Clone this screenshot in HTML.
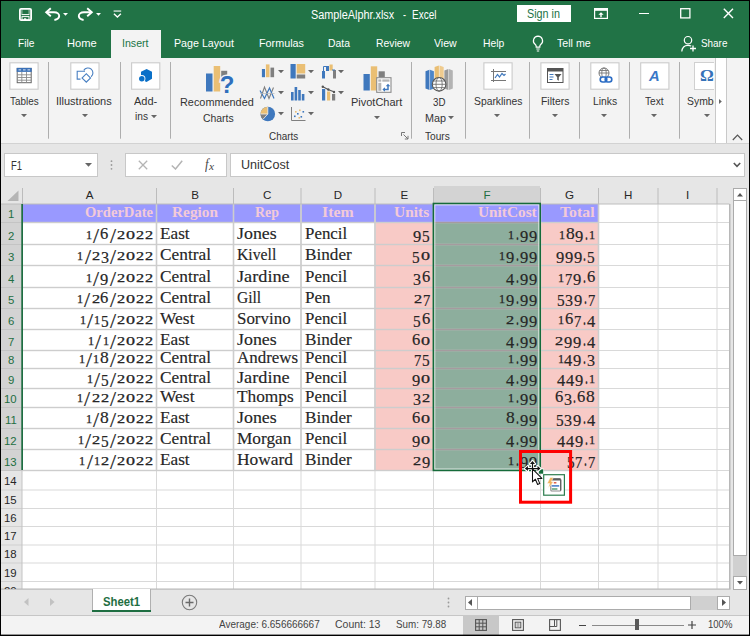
<!DOCTYPE html>
<html><head><meta charset="utf-8"><title>SampleAlphr.xlsx - Excel</title>
<style>
html,body{margin:0;padding:0;}
body{width:750px;height:636px;overflow:hidden;background:#000;position:relative;font-family:"Liberation Sans",sans-serif;}
.b{position:absolute;display:block;}
.t{position:absolute;display:block;white-space:nowrap;transform-origin:0 50%;}
#w{position:absolute;left:0;top:0;width:750px;height:636px;overflow:hidden;}
</style></head><body><div id="w">
<div class="b" style="left:1px;top:1px;width:748px;height:57px;background:#217346;"></div>
<div class="b" style="left:1px;top:58px;width:748px;height:85px;background:#f3f3f3;"></div>
<div class="b" style="left:1px;top:143px;width:748px;height:1px;background:#d2d2d2;"></div>
<div class="b" style="left:1px;top:144px;width:748px;height:42px;background:#e6e6e6;"></div>
<div class="b" style="left:1px;top:186px;width:748px;height:403px;background:#e6e6e6;"></div>
<div class="b" style="left:1px;top:589px;width:748px;height:26px;background:#e6e6e6;"></div>
<div class="b" style="left:1px;top:615px;width:748px;height:20px;background:#f3f3f3;"></div>
<svg class="b" style="left:19px;top:8px;" width="13" height="13" viewBox="0 0 13 13"><rect x=".9" y=".9" width="11.200" height="11.200" rx="1.200" fill="none" stroke="#fff" stroke-width="1.800"/><path d="M2.600 6.600h7.800" stroke="#fff" stroke-width="1"/><path d="M2.900 1.500v5M10.100 1.500v5" stroke="#fff" stroke-width=".8" opacity=".8"/><rect x="3" y="8.600" width="7" height="3.400" fill="none" stroke="#fff" stroke-width="1"/><rect x="5" y="10.300" width="2.200" height="1.700" fill="#fff"/></svg>
<svg class="b" style="left:44px;top:6px;" width="18" height="16" viewBox="0 0 18 16"><path d="M6.800 2.200L2.200 6.200l4.600 4" fill="none" stroke="#fff" stroke-width="1.900"/><path d="M2.800 6.200h7.200c3.400 0 5.400 1.800 5.200 4-.2 2-2.200 3.400-4.800 3.800" fill="none" stroke="#fff" stroke-width="1.900"/></svg>
<svg class="b" style="left:63.3px;top:12.7px;" width="5" height="3" viewBox="0 0 5 3"><path d="M0 0h5L2.500 2.800z" fill="#fff"/></svg>
<svg class="b" style="left:75.6px;top:6px;" width="18" height="16" viewBox="0 0 18 16"><g transform="translate(18,0) scale(-1,1)"><path d="M6.800 2.200L2.200 6.200l4.600 4" fill="none" stroke="#fff" stroke-width="1.900"/><path d="M2.800 6.200h7.200c3.400 0 5.400 1.800 5.200 4-.2 2-2.200 3.400-4.800 3.800" fill="none" stroke="#fff" stroke-width="1.900"/></g></svg>
<svg class="b" style="left:96px;top:12.7px;" width="5" height="3" viewBox="0 0 5 3"><path d="M0 0h5L2.500 2.800z" fill="#fff"/></svg>
<svg class="b" style="left:112.5px;top:10px;" width="9" height="8" viewBox="0 0 9 8"><rect x=".6" y=".5" width="7.600" height="1.100" fill="#fff"/><path d="M.9 3.700l3.500 3.300 3.500-3.300" fill="none" stroke="#fff" stroke-width="1.300"/></svg>
<span class="t" style="left:311.40px;top:8.84px;font:400 12px/12px 'Liberation Sans',sans-serif;color:#fff;transform:scaleX(0.9040);">SampleAlphr.xlsx</span>
<span class="t" style="left:402.60px;top:8.84px;font:400 12px/12px 'Liberation Sans',sans-serif;color:#fff;transform:scaleX(0.7519);">-</span>
<span class="t" style="left:411.80px;top:8.84px;font:400 12px/12px 'Liberation Sans',sans-serif;color:#fff;transform:scaleX(0.8316);">Excel</span>
<div class="b" style="left:517px;top:5px;width:54px;height:17px;background:#fff;"></div>
<span class="t" style="left:527.00px;top:7.64px;font:400 12px/12px 'Liberation Sans',sans-serif;color:#217346;transform:scaleX(0.8994);">Sign in</span>
<svg class="b" style="left:594px;top:8px;" width="14" height="11" viewBox="0 0 14 11"><rect x=".6" y=".6" width="12.8" height="9.8" fill="none" stroke="#fff" stroke-width="1.2"/><rect x=".6" y=".6" width="12.8" height="2.2" fill="#fff"/><path d="M7 4.2l2.6 2.6H7.7v2.4H6.3V6.8H4.4z" fill="#fff"/></svg>
<div class="b" style="left:639px;top:13px;width:10px;height:1.2px;background:#fff;"></div>
<svg class="b" style="left:680px;top:8px;" width="11" height="11" viewBox="0 0 11 11"><rect x=".7" y=".7" width="9.2" height="9.2" fill="none" stroke="#fff" stroke-width="1.3"/></svg>
<svg class="b" style="left:723px;top:8px;" width="11" height="11" viewBox="0 0 11 11"><path d="M.8.8l9.2 9.2M10 .8L.8 10" stroke="#fff" stroke-width="1.4" fill="none"/></svg>
<div class="b" style="left:111px;top:30px;width:50px;height:29px;background:#f3f3f3;"></div>
<span class="t" style="left:17.70px;top:38.27px;font:400 11.5px/11.5px 'Liberation Sans',sans-serif;color:#fff;transform:scaleX(0.8844);">File</span>
<span class="t" style="left:66.80px;top:38.27px;font:400 11.5px/11.5px 'Liberation Sans',sans-serif;color:#fff;transform:scaleX(0.9682);">Home</span>
<span class="t" style="left:122.00px;top:38.27px;font:400 11.5px/11.5px 'Liberation Sans',sans-serif;color:#217346;transform:scaleX(0.9217);">Insert</span>
<span class="t" style="left:173.60px;top:38.27px;font:400 11.5px/11.5px 'Liberation Sans',sans-serif;color:#fff;transform:scaleX(0.9276);">Page Layout</span>
<span class="t" style="left:258.60px;top:38.27px;font:400 11.5px/11.5px 'Liberation Sans',sans-serif;color:#fff;transform:scaleX(0.9369);">Formulas</span>
<span class="t" style="left:328.40px;top:38.27px;font:400 11.5px/11.5px 'Liberation Sans',sans-serif;color:#fff;transform:scaleX(0.9015);">Data</span>
<span class="t" style="left:375.50px;top:38.27px;font:400 11.5px/11.5px 'Liberation Sans',sans-serif;color:#fff;transform:scaleX(0.9007);">Review</span>
<span class="t" style="left:434.20px;top:38.27px;font:400 11.5px/11.5px 'Liberation Sans',sans-serif;color:#fff;transform:scaleX(0.9211);">View</span>
<span class="t" style="left:482.70px;top:38.27px;font:400 11.5px/11.5px 'Liberation Sans',sans-serif;color:#fff;transform:scaleX(0.9002);">Help</span>
<svg class="b" style="left:531px;top:35px;" width="14" height="18" viewBox="0 0 14 18"><path d="M7 1.2a4.6 4.6 0 0 0-2.7 8.3c.6.5.9 1.300.9 2.100v.6h3.600v-.6c0-.8.3-1.600.9-2.100A4.600 4.600 0 0 0 7 1.200z" fill="none" stroke="#fff" stroke-width="1.2"/><path d="M5.300 14h3.400M5.800 16h2.400" stroke="#fff" stroke-width="1.100"/></svg>
<span class="t" style="left:557.30px;top:38.27px;font:400 11.5px/11.5px 'Liberation Sans',sans-serif;color:#fff;transform:scaleX(0.9252);">Tell me</span>
<svg class="b" style="left:681px;top:35px;" width="16" height="18" viewBox="0 0 16 18"><circle cx="7" cy="5.200" r="3.700" fill="none" stroke="#fff" stroke-width="1.200"/><path d="M.8 16.500c.3-4 2.700-6.200 6.200-6.200 1.200 0 2.300.3 3.200.8" fill="none" stroke="#fff" stroke-width="1.200"/><path d="M12 10.500v6M9 13.500h6" stroke="#fff" stroke-width="1.300"/></svg>
<span class="t" style="left:701.20px;top:38.27px;font:400 11.5px/11.5px 'Liberation Sans',sans-serif;color:#fff;transform:scaleX(0.8606);">Share</span>
<svg class="b" style="left:46.9px;top:61px;" width="3" height="79" viewBox="0 0 3 79"><rect x="1" y="1" width=".9" height="76.700" fill="#a6a6a6"/></svg>
<svg class="b" style="left:118.9px;top:61px;" width="3" height="79" viewBox="0 0 3 79"><rect x="1" y="1" width=".9" height="76.700" fill="#a6a6a6"/></svg>
<svg class="b" style="left:168.8px;top:61px;" width="3" height="79" viewBox="0 0 3 79"><rect x="1" y="1" width=".9" height="76.700" fill="#a6a6a6"/></svg>
<svg class="b" style="left:410.3px;top:61px;" width="3" height="79" viewBox="0 0 3 79"><rect x="1" y="1" width=".9" height="76.700" fill="#a6a6a6"/></svg>
<svg class="b" style="left:464px;top:61px;" width="3" height="79" viewBox="0 0 3 79"><rect x="1" y="1" width=".9" height="76.700" fill="#a6a6a6"/></svg>
<svg class="b" style="left:528.4px;top:61px;" width="3" height="79" viewBox="0 0 3 79"><rect x="1" y="1" width=".9" height="76.700" fill="#a6a6a6"/></svg>
<svg class="b" style="left:578.4px;top:61px;" width="3" height="79" viewBox="0 0 3 79"><rect x="1" y="1" width=".9" height="76.700" fill="#a6a6a6"/></svg>
<svg class="b" style="left:628.1px;top:61px;" width="3" height="79" viewBox="0 0 3 79"><rect x="1" y="1" width=".9" height="76.700" fill="#a6a6a6"/></svg>
<svg class="b" style="left:677.8px;top:61px;" width="3" height="79" viewBox="0 0 3 79"><rect x="1" y="1" width=".9" height="76.700" fill="#a6a6a6"/></svg>
<svg class="b" style="left:8px;top:61px;" width="32" height="31" viewBox="0 0 32 31"><rect x="1.9000000000000004" y="1.7999999999999972" width="28.2" height="26.4" fill="#fff" stroke="#cbcbcb" stroke-width="1.100"/></svg>
<svg class="b" style="left:16px;top:67px;" width="17" height="17" viewBox="0 0 17 17"><rect x="1.200" y="1.400" width="14" height="14.300" fill="#fff" stroke="#666" stroke-width="1"/><rect x=".7" y=".9" width="15" height="4" fill="#3c72b8"/><path d="M2.500 2.900h2.600M7 2.900h2.600M11.500 2.900h2.600" stroke="#dfe9f6" stroke-width="1"/><path d="M1.200 7.800h14M1.200 10.500h14M1.200 13.200h14M5.800 4.900v10.800M10.500 4.900v10.800" stroke="#8a8a8a" stroke-width=".9" fill="none"/></svg>
<span class="t" style="left:9.80px;top:96.05px;font:400 11.4px/11.4px 'Liberation Sans',sans-serif;color:#333;transform:scaleX(0.8681);">Tables</span>
<svg class="b" style="left:21px;top:114.0px;" width="6" height="3.4" viewBox="0 0 6 3.4"><path d="M0 0h6L3 3.200z" fill="#666"/></svg>
<svg class="b" style="left:69px;top:61px;" width="32" height="31" viewBox="0 0 32 31"><rect x="1.7999999999999972" y="1.7999999999999972" width="28.2" height="26.4" fill="#fff" stroke="#cbcbcb" stroke-width="1.100"/></svg>
<svg class="b" style="left:76px;top:66px;" width="18" height="18" viewBox="0 0 18 18"><path d="M9 5.300H1.200v7.800h3.300" fill="none" stroke="#4a80c2" stroke-width="1.100"/><path d="M7.800 4.400a4.900 4.900 0 1 1 7.300 6.300" fill="none" stroke="#4a80c2" stroke-width="1.100"/><rect x="7.300" y="8.900" width="6" height="6" transform="rotate(45 10.300 11.900)" fill="#fff" stroke="#4a80c2" stroke-width="1.100"/></svg>
<span class="t" style="left:56.40px;top:96.05px;font:400 11.4px/11.4px 'Liberation Sans',sans-serif;color:#333;transform:scaleX(0.9678);">Illustrations</span>
<svg class="b" style="left:81.5px;top:114.0px;" width="6" height="3.4" viewBox="0 0 6 3.4"><path d="M0 0h6L3 3.200z" fill="#666"/></svg>
<svg class="b" style="left:130px;top:61px;" width="32" height="31" viewBox="0 0 32 31"><rect x="1.5999999999999943" y="1.7999999999999972" width="28.2" height="26.4" fill="#fff" stroke="#cbcbcb" stroke-width="1.100"/></svg>
<svg class="b" style="left:138px;top:68px;" width="16" height="15" viewBox="0 0 16 15"><path d="M8.600 1L14 3.800v7L8.500 13.900 3 11.200V3.800z" fill="#0a70c8"/><circle cx="3.800" cy="10.700" r="3.600" fill="#fff"/><circle cx="3.800" cy="10.700" r="2.750" fill="#0a70c8"/></svg>
<span class="t" style="left:133.60px;top:96.05px;font:400 11.4px/11.4px 'Liberation Sans',sans-serif;color:#333;transform:scaleX(0.9675);">Add-</span>
<span class="t" style="left:135.20px;top:110.55px;font:400 11.4px/11.4px 'Liberation Sans',sans-serif;color:#333;transform:scaleX(0.8926);">ins</span>
<svg class="b" style="left:150.8px;top:114.60000000000001px;" width="6" height="3.4" viewBox="0 0 6 3.4"><path d="M0 0h6L3 3.200z" fill="#666"/></svg>
<svg class="b" style="left:206px;top:65px;" width="28" height="29" viewBox="0 0 28 29"><rect x="0" y="8.500" width="6.500" height="18" fill="#3f78bd"/><rect x="7.700" y="1" width="6.500" height="25.500" fill="#eabf74"/><rect x="15.200" y="5.800" width="6" height="7" fill="#7f7f7f"/><text x="13.800" y="27.500" font-family="Liberation Sans" font-weight="700" font-size="24" fill="#fff" stroke="#f3f3f3" stroke-width="3">?</text><text x="13.800" y="27.500" font-family="Liberation Sans" font-weight="700" font-size="24" fill="#2f6fbd">?</text></svg>
<span class="t" style="left:180.40px;top:97.35px;font:400 11.4px/11.4px 'Liberation Sans',sans-serif;color:#333;transform:scaleX(0.9545);">Recommended</span>
<span class="t" style="left:202.70px;top:112.55px;font:400 11.4px/11.4px 'Liberation Sans',sans-serif;color:#333;transform:scaleX(0.9144);">Charts</span>
<svg class="b" style="left:259.5px;top:63px;" width="16" height="16" viewBox="0 0 16 16"><rect x="1.900" y="6" width="3.100" height="8.200" fill="#3f78bd"/><rect x="5.900" y="1.400" width="3.600" height="12.800" fill="#eabf74"/><rect x="10.500" y="4.600" width="3.600" height="9.600" fill="#7f7f7f"/></svg>
<svg class="b" style="left:277.6px;top:69.7px;" width="6" height="3.4" viewBox="0 0 6 3.4"><path d="M0 0h6L3 3.200z" fill="#666"/></svg>
<svg class="b" style="left:290px;top:63px;" width="16" height="16" viewBox="0 0 16 16"><rect x=".5" y="1" width="5.200" height="14.500" fill="#3f78bd"/><rect x="6.700" y="1" width="8.500" height="9.500" fill="#eabf74"/><rect x="6.700" y="11.500" width="8.500" height="4" fill="#7f7f7f"/></svg>
<svg class="b" style="left:308px;top:69.7px;" width="6" height="3.4" viewBox="0 0 6 3.4"><path d="M0 0h6L3 3.200z" fill="#666"/></svg>
<svg class="b" style="left:320.5px;top:63px;" width="16" height="16" viewBox="0 0 16 16"><rect x="1" y="8" width="3" height="7.500" fill="#3f78bd"/><rect x="5" y="3" width="3" height="5" fill="#3f78bd"/><rect x="8.500" y="1.500" width="3.200" height="6" fill="#eabf74"/><rect x="12" y="7" width="3" height="8.500" fill="#7f7f7f"/><path d="M2.500 8V3.500h3M11 7h3" stroke="#3f78bd" stroke-width="1" fill="none"/></svg>
<svg class="b" style="left:338.4px;top:69.7px;" width="6" height="3.4" viewBox="0 0 6 3.4"><path d="M0 0h6L3 3.200z" fill="#666"/></svg>
<svg class="b" style="left:259px;top:84.5px;" width="17" height="16" viewBox="0 0 17 16"><path d="M1.500 13.500L5.500 2l4.500 11.500L14.500 2.500" fill="none" stroke="#7f7f7f" stroke-width="1.100"/><path d="M1 5.500l4.500 8L10.500 3l4.500 10.500" fill="none" stroke="#3f78bd" stroke-width="1.200"/><path d="M1 8.500h14.500" stroke="#b8b8b8" stroke-width=".7"/></svg>
<svg class="b" style="left:277.6px;top:91.2px;" width="6" height="3.4" viewBox="0 0 6 3.4"><path d="M0 0h6L3 3.200z" fill="#666"/></svg>
<svg class="b" style="left:290px;top:84.5px;" width="16" height="16" viewBox="0 0 16 16"><rect x="1" y="7" width="2.600" height="8.500" fill="#3f78bd"/><rect x="4.600" y="2" width="2.600" height="13.500" fill="#3f78bd"/><rect x="8.200" y="5" width="2.600" height="10.500" fill="#3f78bd"/><rect x="11.800" y="9" width="2.600" height="6.500" fill="#3f78bd"/></svg>
<svg class="b" style="left:308px;top:91.2px;" width="6" height="3.4" viewBox="0 0 6 3.4"><path d="M0 0h6L3 3.200z" fill="#666"/></svg>
<svg class="b" style="left:320.5px;top:84.5px;" width="16" height="16" viewBox="0 0 16 16"><rect x="1" y="4" width="3.200" height="11.500" fill="#3f78bd"/><rect x="6" y="6.500" width="3.200" height="9" fill="#eabf74"/><rect x="11" y="9" width="3.200" height="6.500" fill="#7f7f7f"/><path d="M1.500 1.500l5.500 3 6.500 2.500" fill="none" stroke="#555" stroke-width="1.100"/><circle cx="1.800" cy="1.800" r="1.200" fill="#555"/><circle cx="7.300" cy="4.500" r="1.200" fill="#555"/><circle cx="13" cy="7" r="1.200" fill="#555"/></svg>
<svg class="b" style="left:338.4px;top:91.2px;" width="6" height="3.4" viewBox="0 0 6 3.4"><path d="M0 0h6L3 3.200z" fill="#666"/></svg>
<svg class="b" style="left:259.5px;top:106px;" width="16" height="16" viewBox="0 0 16 16"><circle cx="7.800" cy="8" r="7.300" fill="#3f78bd"/><path d="M7.800 8V.7A7.300 7.300 0 0 0 .5 8z" fill="#eabf74"/><path d="M7.800 8H.5a7.300 7.300 0 0 0 2.400 5.400z" fill="#7f7f7f"/><path d="M7.800 .7V8H.5M7.800 8l-4.900 5.400" stroke="#f3f3f3" stroke-width=".8" fill="none"/></svg>
<svg class="b" style="left:277.6px;top:112.2px;" width="6" height="3.4" viewBox="0 0 6 3.4"><path d="M0 0h6L3 3.200z" fill="#666"/></svg>
<svg class="b" style="left:290px;top:106px;" width="16" height="16" viewBox="0 0 16 16"><path d="M1.500 1v13.500H15.500" fill="none" stroke="#7f7f7f" stroke-width="1"/><g fill="#3f78bd"><rect x="4" y="9.500" width="1.600" height="1.600"/><rect x="7" y="7" width="1.600" height="1.600"/><rect x="10.500" y="10" width="1.600" height="1.600"/><rect x="12.500" y="5" width="1.600" height="1.600"/></g><g fill="#eabf74"><rect x="5" y="5" width="1.600" height="1.600"/><rect x="9" y="3.500" width="1.600" height="1.600"/><rect x="8.500" y="11" width="1.600" height="1.600"/></g></svg>
<svg class="b" style="left:308px;top:112.2px;" width="6" height="3.4" viewBox="0 0 6 3.4"><path d="M0 0h6L3 3.200z" fill="#666"/></svg>
<span class="t" style="left:269.00px;top:130.75px;font:400 11.4px/11.4px 'Liberation Sans',sans-serif;color:#333;transform:scaleX(0.8697);">Charts</span>
<svg class="b" style="left:362.5px;top:66px;" width="29" height="27" viewBox="0 0 29 27"><rect x=".5" y="8" width="6.300" height="16.500" fill="#3f78bd"/><rect x="7.800" y=".3" width="6.400" height="24.200" fill="#eabf74"/><rect x="15.600" y="5.300" width="6.200" height="6" fill="#7f7f7f"/><rect x="13.700" y="11.700" width="14.300" height="14.600" fill="#fff" stroke="#8a8a8a" stroke-width="1.100"/><rect x="15.300" y="13.400" width="3" height="2.300" fill="#b5b5b5"/><rect x="19.300" y="13.400" width="7.200" height="2.300" fill="#b5b5b5"/><rect x="15.300" y="16.800" width="3" height="8" fill="#b5b5b5"/><path d="M20.300 23.500h4.700v-4" fill="none" stroke="#3f78bd" stroke-width="1.500"/><path d="M22.700 20.300l2.300-2.600 2.300 2.600zM22 21.200l-2.600 2.300 2.600 2.300z" fill="#3f78bd"/></svg>
<span class="t" style="left:350.70px;top:97.35px;font:400 11.4px/11.4px 'Liberation Sans',sans-serif;color:#333;transform:scaleX(0.9641);">PivotChart</span>
<svg class="b" style="left:373.7px;top:115.80000000000001px;" width="6" height="3.4" viewBox="0 0 6 3.4"><path d="M0 0h6L3 3.200z" fill="#666"/></svg>
<svg class="b" style="left:401px;top:132px;" width="8" height="8" viewBox="0 0 8 8"><path d="M.5 4V.5H4" fill="none" stroke="#777" stroke-width="1"/><path d="M2.500 2.500l4.500 4.500M7 3.800V7H3.800" fill="none" stroke="#777" stroke-width="1"/></svg>
<svg class="b" style="left:424.5px;top:65px;" width="29" height="28" viewBox="0 0 29 28"><path d="M.5 6.300l4-1.500V25l-4-1.500z" fill="#3f78bd"/><path d="M5 4.800l3.900 1.500V23.500L5 25z" fill="#4d86c9"/><path d="M4.500 4.800h.6V25h-.6z" fill="#a9c4e6"/><path d="M9.600 2.100L13.900.6V14H9.600z" fill="#eabf74"/><path d="M14.500.6l4.200 1.500V14h-4.200z" fill="#efcb8e"/><path d="M19.400 5.500l4-1.500v21l-4-1.500z" fill="#9a9a9a"/><path d="M24 4l3.800 1.500V23.500L24 25z" fill="#b3b3b3"/><circle cx="14.100" cy="19.300" r="6.800" fill="#fff" stroke="#555" stroke-width="1.100"/><ellipse cx="14.100" cy="19.300" rx="3.100" ry="6.800" fill="none" stroke="#666" stroke-width=".8"/><path d="M7.300 19.300h13.600M8.300 16H19.900M8.300 22.600H19.900" stroke="#666" stroke-width=".8" fill="none"/></svg>
<span class="t" style="left:432.60px;top:97.35px;font:400 11.4px/11.4px 'Liberation Sans',sans-serif;color:#333;transform:scaleX(0.8514);">3D</span>
<span class="t" style="left:425.00px;top:112.55px;font:400 11.4px/11.4px 'Liberation Sans',sans-serif;color:#333;transform:scaleX(0.9471);">Map</span>
<svg class="b" style="left:448.2px;top:116.2px;" width="6" height="3.4" viewBox="0 0 6 3.4"><path d="M0 0h6L3 3.200z" fill="#666"/></svg>
<span class="t" style="left:425.40px;top:130.75px;font:400 11.4px/11.4px 'Liberation Sans',sans-serif;color:#333;transform:scaleX(0.8897);">Tours</span>
<svg class="b" style="left:482px;top:61px;" width="32" height="31" viewBox="0 0 32 31"><rect x="1.8999999999999773" y="1.7999999999999972" width="28.2" height="26.4" fill="#fff" stroke="#cbcbcb" stroke-width="1.100"/></svg>
<svg class="b" style="left:490px;top:67.5px;" width="17" height="16" viewBox="0 0 17 16"><path d="M3.500 1v13M1 3.500h15M1 12.500h15" stroke="#777" stroke-width="1" fill="none"/><path d="M5 10l2.500-3.500 2 2.500 2.500-3.500 2 2 1.500-1.500" fill="none" stroke="#3f78bd" stroke-width="1.200"/></svg>
<span class="t" style="left:473.60px;top:96.05px;font:400 11.4px/11.4px 'Liberation Sans',sans-serif;color:#333;transform:scaleX(0.9091);">Sparklines</span>
<svg class="b" style="left:494.3px;top:114.0px;" width="6" height="3.4" viewBox="0 0 6 3.4"><path d="M0 0h6L3 3.200z" fill="#666"/></svg>
<svg class="b" style="left:539px;top:61px;" width="32" height="31" viewBox="0 0 32 31"><rect x="1.8999999999999773" y="1.7999999999999972" width="28.2" height="26.4" fill="#fff" stroke="#cbcbcb" stroke-width="1.100"/></svg>
<svg class="b" style="left:547px;top:67.5px;" width="17" height="16" viewBox="0 0 17 16"><rect x=".5" y=".5" width="15.500" height="14" fill="#fff" stroke="#555" stroke-width="1"/><rect x=".5" y=".5" width="15.500" height="3" fill="#555"/><path d="M2.500 6.500h4M2.500 9h4M2.500 11.500h3" stroke="#3f78bd" stroke-width="1.100"/><path d="M7.500 6h7l-2.700 3.300v3.500l-1.600-1V9.300z" fill="#555"/></svg>
<span class="t" style="left:540.60px;top:96.05px;font:400 11.4px/11.4px 'Liberation Sans',sans-serif;color:#333;transform:scaleX(0.9151);">Filters</span>
<svg class="b" style="left:551.7px;top:114.0px;" width="6" height="3.4" viewBox="0 0 6 3.4"><path d="M0 0h6L3 3.200z" fill="#666"/></svg>
<svg class="b" style="left:589px;top:61px;" width="32" height="31" viewBox="0 0 32 31"><rect x="1.7999999999999545" y="1.7999999999999972" width="28.2" height="26.4" fill="#fff" stroke="#cbcbcb" stroke-width="1.100"/></svg>
<svg class="b" style="left:597px;top:66.5px;" width="17" height="18" viewBox="0 0 17 18"><circle cx="7" cy="6" r="5" fill="none" stroke="#777" stroke-width="1"/><ellipse cx="7" cy="6" rx="2.200" ry="5" fill="none" stroke="#777" stroke-width=".9"/><path d="M2 6h10M2.800 3.500h8.400" stroke="#777" stroke-width=".9"/><rect x="3.200" y="10" width="6.600" height="5" rx="2.500" fill="#fff" stroke="#2b6cc4" stroke-width="1.600"/><rect x="8.200" y="10" width="6.600" height="5" rx="2.500" fill="none" stroke="#2b6cc4" stroke-width="1.600"/></svg>
<span class="t" style="left:592.80px;top:96.05px;font:400 11.4px/11.4px 'Liberation Sans',sans-serif;color:#333;transform:scaleX(0.9091);">Links</span>
<svg class="b" style="left:601.4px;top:114.0px;" width="6" height="3.4" viewBox="0 0 6 3.4"><path d="M0 0h6L3 3.200z" fill="#666"/></svg>
<svg class="b" style="left:639px;top:61px;" width="32" height="31" viewBox="0 0 32 31"><rect x="1.7000000000000455" y="1.7999999999999972" width="28.2" height="26.4" fill="#fff" stroke="#cbcbcb" stroke-width="1.100"/></svg>
<span class="t" style="left:649.33px;top:68.30px;font:italic 700 15px/15px 'Liberation Sans',sans-serif;color:#3a78c8;transform:scaleX(0.9843);">A</span>
<span class="t" style="left:644.90px;top:96.05px;font:400 11.4px/11.4px 'Liberation Sans',sans-serif;color:#333;transform:scaleX(0.8939);">Text</span>
<svg class="b" style="left:651px;top:114.0px;" width="6" height="3.4" viewBox="0 0 6 3.4"><path d="M0 0h6L3 3.200z" fill="#666"/></svg>
<div class="b" style="left:680px;top:59px;width:34px;height:80px;overflow:hidden;"><div class="b" style="left:13.600px;top:3px;width:27px;height:26px;background:#fff;border:1px solid #d0d0d0;"></div><span class="t" style="left:20.00px;top:8.78px;font:700 16.5px/16.5px 'Liberation Serif',serif;color:#3572b8;transform:scaleX(1.0455);">Ω</span><span class="t" style="left:7.30px;top:37.05px;font:400 11.4px/11.4px 'Liberation Sans',sans-serif;color:#333;transform:scaleX(0.9126);">Symbols</span></div>
<svg class="b" style="left:704.4px;top:114.0px;" width="6" height="3.4" viewBox="0 0 6 3.4"><path d="M0 0h6L3 3.200z" fill="#666"/></svg>
<div class="b" style="left:714.8px;top:58px;width:9.8px;height:85px;background:#fff;border-left:1px solid #c9c9c9;border-right:1px solid #c9c9c9;"></div>
<svg class="b" style="left:719.3px;top:98.6px;" width="4" height="5" viewBox="0 0 4 5"><path d="M0 0l2.800 2.500L0 5z" fill="#666"/></svg>
<svg class="b" style="left:732px;top:134px;" width="11" height="7" viewBox="0 0 11 7"><path d="M.8 6L5.500 1.200 10.200 6" fill="none" stroke="#555" stroke-width="1.200"/></svg>
<div class="b" style="left:4px;top:153px;width:92px;height:22px;background:#fff;border:1px solid #c8c8c8;"></div>
<span class="t" style="left:10.50px;top:159.64px;font:400 12px/12px 'Liberation Sans',sans-serif;color:#333;transform:scaleX(0.7852);">F1</span>
<svg class="b" style="left:84.5px;top:162.5px;" width="7" height="4" viewBox="0 0 7 4"><path d="M0 0h7L3.500 3.800z" fill="#666"/></svg>
<svg class="b" style="left:110px;top:160px;" width="3" height="10" viewBox="0 0 3 10"><circle cx="1.500" cy="1.200" r=".9" fill="#9a9a9a"/><circle cx="1.500" cy="5" r=".9" fill="#9a9a9a"/><circle cx="1.500" cy="8.800" r=".9" fill="#9a9a9a"/></svg>
<div class="b" style="left:125px;top:153px;width:99.5px;height:22px;background:#fff;border:1px solid #c8c8c8;"></div>
<svg class="b" style="left:138px;top:160px;" width="10" height="10" viewBox="0 0 10 10"><path d="M.8.8l8.400 8.400M9.200.8L.8 9.200" stroke="#b4b4b4" stroke-width="1.300" fill="none"/></svg>
<svg class="b" style="left:171px;top:160px;" width="12" height="10" viewBox="0 0 12 10"><path d="M.8 5.500l3.700 3.500L11.200.8" stroke="#b4b4b4" stroke-width="1.500" fill="none"/></svg>
<span class="t" style="left:204.50px;top:157.78px;font:italic 400 14px/14px 'Liberation Serif',serif;color:#444;transform:scaleX(0.9042);">f</span>
<span class="t" style="left:209.44px;top:161.62px;font:italic 400 10px/10px 'Liberation Serif',serif;color:#444;transform:scaleX(1.1366);">x</span>
<div class="b" style="left:229.5px;top:153px;width:513px;height:22px;background:#fff;border:1px solid #c8c8c8;"></div>
<span class="t" style="left:241.20px;top:159.42px;font:400 12.5px/12.5px 'Liberation Sans',sans-serif;color:#333;transform:scaleX(1.0055);">UnitCost</span>
<svg class="b" style="left:733px;top:161.5px;" width="8" height="6" viewBox="0 0 8 6"><path d="M.8 1l3.200 3.300L7.200 1" fill="none" stroke="#555" stroke-width="1.600"/></svg>
<svg class="b" style="left:0px;top:0px;pointer-events:none;" width="750" height="636" viewBox="0 0 750 636"><rect x="22" y="204" width="707.5" height="385" fill="#fff"/><rect x="434" y="186" width="106" height="18" fill="#d3d3d3"/><rect x="1" y="204" width="21" height="266" fill="#d3d3d3"/><rect x="22" y="204" width="576" height="18" fill="#9999ff"/><rect x="375.5" y="222" width="58.5" height="248" fill="#f8cac6"/><rect x="540" y="222" width="58" height="248" fill="#f8cac6"/><rect x="433" y="222" width="107" height="248" fill="#8dae9d"/><rect x="156" y="204" width="1" height="385" fill="#d9d9d9"/><rect x="233" y="204" width="1" height="385" fill="#d9d9d9"/><rect x="300.5" y="204" width="1" height="385" fill="#d9d9d9"/><rect x="374.5" y="204" width="1" height="385" fill="#d9d9d9"/><rect x="433" y="204" width="1" height="385" fill="#d9d9d9"/><rect x="540" y="204" width="1" height="385" fill="#d9d9d9"/><rect x="598" y="204" width="1" height="385" fill="#d9d9d9"/><rect x="657.5" y="204" width="1" height="385" fill="#d9d9d9"/><rect x="716.5" y="204" width="1" height="385" fill="#d9d9d9"/><rect x="22" y="222" width="707.5" height="1" fill="#d9d9d9"/><rect x="22" y="244" width="707.5" height="1" fill="#d9d9d9"/><rect x="22" y="265" width="707.5" height="1" fill="#d9d9d9"/><rect x="22" y="287" width="707.5" height="1" fill="#d9d9d9"/><rect x="22" y="308" width="707.5" height="1" fill="#d9d9d9"/><rect x="22" y="329" width="707.5" height="1" fill="#d9d9d9"/><rect x="22" y="350" width="707.5" height="1" fill="#d9d9d9"/><rect x="22" y="368" width="707.5" height="1" fill="#d9d9d9"/><rect x="22" y="388" width="707.5" height="1" fill="#d9d9d9"/><rect x="22" y="407" width="707.5" height="1" fill="#d9d9d9"/><rect x="22" y="428" width="707.5" height="1" fill="#d9d9d9"/><rect x="22" y="449" width="707.5" height="1" fill="#d9d9d9"/><rect x="22" y="470" width="707.5" height="1" fill="#d9d9d9"/><rect x="22" y="489.5" width="707.5" height="1" fill="#d9d9d9"/><rect x="22" y="508" width="707.5" height="1" fill="#d9d9d9"/><rect x="22" y="526" width="707.5" height="1" fill="#d9d9d9"/><rect x="22" y="544.5" width="707.5" height="1" fill="#d9d9d9"/><rect x="22" y="562.5" width="707.5" height="1" fill="#d9d9d9"/><rect x="22" y="581" width="707.5" height="1" fill="#d9d9d9"/><rect x="155.7" y="204" width="1.6" height="267" fill="#cdcdcd"/><rect x="232.7" y="204" width="1.6" height="267" fill="#cdcdcd"/><rect x="300.2" y="204" width="1.6" height="267" fill="#cdcdcd"/><rect x="374.2" y="204" width="1.6" height="267" fill="#cdcdcd"/><rect x="432.7" y="204" width="1.6" height="267" fill="#cdcdcd"/><rect x="539.7" y="204" width="1.6" height="267" fill="#cdcdcd"/><rect x="597.7" y="204" width="1.6" height="267" fill="#cdcdcd"/><rect x="22" y="221.8" width="577" height="1.4" fill="#cdcdcd"/><rect x="434" y="221.8" width="106" height="1.4" fill="#a59b9f"/><rect x="22" y="243.8" width="577" height="1.4" fill="#cdcdcd"/><rect x="434" y="243.8" width="106" height="1.4" fill="#a59b9f"/><rect x="22" y="264.8" width="577" height="1.4" fill="#cdcdcd"/><rect x="434" y="264.8" width="106" height="1.4" fill="#a59b9f"/><rect x="22" y="286.8" width="577" height="1.4" fill="#cdcdcd"/><rect x="434" y="286.8" width="106" height="1.4" fill="#a59b9f"/><rect x="22" y="307.8" width="577" height="1.4" fill="#cdcdcd"/><rect x="434" y="307.8" width="106" height="1.4" fill="#a59b9f"/><rect x="22" y="328.8" width="577" height="1.4" fill="#cdcdcd"/><rect x="434" y="328.8" width="106" height="1.4" fill="#a59b9f"/><rect x="22" y="349.8" width="577" height="1.4" fill="#cdcdcd"/><rect x="434" y="349.8" width="106" height="1.4" fill="#a59b9f"/><rect x="22" y="367.8" width="577" height="1.4" fill="#cdcdcd"/><rect x="434" y="367.8" width="106" height="1.4" fill="#a59b9f"/><rect x="22" y="387.8" width="577" height="1.4" fill="#cdcdcd"/><rect x="434" y="387.8" width="106" height="1.4" fill="#a59b9f"/><rect x="22" y="406.8" width="577" height="1.4" fill="#cdcdcd"/><rect x="434" y="406.8" width="106" height="1.4" fill="#a59b9f"/><rect x="22" y="427.8" width="577" height="1.4" fill="#cdcdcd"/><rect x="434" y="427.8" width="106" height="1.4" fill="#a59b9f"/><rect x="22" y="448.8" width="577" height="1.4" fill="#cdcdcd"/><rect x="434" y="448.8" width="106" height="1.4" fill="#a59b9f"/><rect x="22" y="469.8" width="577" height="1.4" fill="#cdcdcd"/><rect x="156" y="188" width="1" height="16" fill="#bcbcbc"/><rect x="233" y="188" width="1" height="16" fill="#bcbcbc"/><rect x="300.5" y="188" width="1" height="16" fill="#bcbcbc"/><rect x="374.5" y="188" width="1" height="16" fill="#bcbcbc"/><rect x="433" y="188" width="1" height="16" fill="#bcbcbc"/><rect x="540" y="188" width="1" height="16" fill="#bcbcbc"/><rect x="598" y="188" width="1" height="16" fill="#bcbcbc"/><rect x="657.5" y="188" width="1" height="16" fill="#bcbcbc"/><rect x="716.5" y="188" width="1" height="16" fill="#bcbcbc"/><rect x="22" y="188" width="1" height="16" fill="#bcbcbc"/><rect x="1" y="203.5" width="728.5" height="1" fill="#bdbdbd"/><rect x="1" y="222" width="21" height="1" fill="#c4c4c4"/><rect x="1" y="244" width="21" height="1" fill="#c4c4c4"/><rect x="1" y="265" width="21" height="1" fill="#c4c4c4"/><rect x="1" y="287" width="21" height="1" fill="#c4c4c4"/><rect x="1" y="308" width="21" height="1" fill="#c4c4c4"/><rect x="1" y="329" width="21" height="1" fill="#c4c4c4"/><rect x="1" y="350" width="21" height="1" fill="#c4c4c4"/><rect x="1" y="368" width="21" height="1" fill="#c4c4c4"/><rect x="1" y="388" width="21" height="1" fill="#c4c4c4"/><rect x="1" y="407" width="21" height="1" fill="#c4c4c4"/><rect x="1" y="428" width="21" height="1" fill="#c4c4c4"/><rect x="1" y="449" width="21" height="1" fill="#c4c4c4"/><rect x="1" y="470" width="21" height="1" fill="#c4c4c4"/><rect x="1" y="489.5" width="21" height="1" fill="#cfcfcf"/><rect x="1" y="508" width="21" height="1" fill="#cfcfcf"/><rect x="1" y="526" width="21" height="1" fill="#cfcfcf"/><rect x="1" y="544.5" width="21" height="1" fill="#cfcfcf"/><rect x="1" y="562.5" width="21" height="1" fill="#cfcfcf"/><rect x="1" y="581" width="21" height="1" fill="#cfcfcf"/><rect x="21.5" y="204" width="1" height="385" fill="#c4c4c4"/><rect x="21.3" y="204" width="1.7" height="266" fill="#1e6e42"/><path d="M18.500 190.500v10.500H7.500z" fill="#b5b5b5"/><rect x="433.45000000000005" y="203.54999999999998" width="106.69999999999997" height="266.8" fill="none" stroke="#156b3a" stroke-width="1.7"/><rect x="434.8" y="204.89999999999998" width="103.99999999999997" height="264.1" fill="none" stroke="#fff" stroke-opacity=".7" stroke-width="1"/><rect x="729.0" y="204" width="1.5" height="385" fill="#b8b8b8"/><rect x="1" y="588.5" width="729.5" height="1.2" fill="#b8b8b8"/></svg>
<span class="t" style="left:85.63px;top:189.38px;font:400 11.6px/11.6px 'Liberation Sans',sans-serif;color:#262626;transform:scaleX(1.0000);">A</span>
<span class="t" style="left:191.13px;top:189.38px;font:400 11.6px/11.6px 'Liberation Sans',sans-serif;color:#262626;transform:scaleX(1.0000);">B</span>
<span class="t" style="left:263.06px;top:189.38px;font:400 11.6px/11.6px 'Liberation Sans',sans-serif;color:#262626;transform:scaleX(1.0000);">C</span>
<span class="t" style="left:333.81px;top:189.38px;font:400 11.6px/11.6px 'Liberation Sans',sans-serif;color:#262626;transform:scaleX(1.0000);">D</span>
<span class="t" style="left:400.38px;top:189.38px;font:400 11.6px/11.6px 'Liberation Sans',sans-serif;color:#262626;transform:scaleX(1.0000);">E</span>
<span class="t" style="left:483.46px;top:189.38px;font:400 11.6px/11.6px 'Liberation Sans',sans-serif;color:#1e6e42;transform:scaleX(1.0000);">F</span>
<span class="t" style="left:564.99px;top:189.38px;font:400 11.6px/11.6px 'Liberation Sans',sans-serif;color:#262626;transform:scaleX(1.0000);">G</span>
<span class="t" style="left:624.06px;top:189.38px;font:400 11.6px/11.6px 'Liberation Sans',sans-serif;color:#262626;transform:scaleX(1.0000);">H</span>
<span class="t" style="left:685.89px;top:189.38px;font:400 11.6px/11.6px 'Liberation Sans',sans-serif;color:#262626;transform:scaleX(1.0000);">I</span>
<span class="t" style="left:7.55px;top:208.38px;font:400 11.6px/11.6px 'Liberation Sans',sans-serif;color:#1e6e42;transform:scaleX(0.9800);">1</span>
<span class="t" style="left:7.55px;top:230.38px;font:400 11.6px/11.6px 'Liberation Sans',sans-serif;color:#1e6e42;transform:scaleX(0.9800);">2</span>
<span class="t" style="left:7.55px;top:251.38px;font:400 11.6px/11.6px 'Liberation Sans',sans-serif;color:#1e6e42;transform:scaleX(0.9800);">3</span>
<span class="t" style="left:7.55px;top:273.38px;font:400 11.6px/11.6px 'Liberation Sans',sans-serif;color:#1e6e42;transform:scaleX(0.9800);">4</span>
<span class="t" style="left:7.55px;top:294.38px;font:400 11.6px/11.6px 'Liberation Sans',sans-serif;color:#1e6e42;transform:scaleX(0.9800);">5</span>
<span class="t" style="left:7.55px;top:315.38px;font:400 11.6px/11.6px 'Liberation Sans',sans-serif;color:#1e6e42;transform:scaleX(0.9800);">6</span>
<span class="t" style="left:7.55px;top:336.38px;font:400 11.6px/11.6px 'Liberation Sans',sans-serif;color:#1e6e42;transform:scaleX(0.9800);">7</span>
<span class="t" style="left:7.55px;top:354.38px;font:400 11.6px/11.6px 'Liberation Sans',sans-serif;color:#1e6e42;transform:scaleX(0.9800);">8</span>
<span class="t" style="left:7.55px;top:374.38px;font:400 11.6px/11.6px 'Liberation Sans',sans-serif;color:#1e6e42;transform:scaleX(0.9800);">9</span>
<span class="t" style="left:4.38px;top:393.38px;font:400 11.6px/11.6px 'Liberation Sans',sans-serif;color:#1e6e42;transform:scaleX(0.9800);">10</span>
<span class="t" style="left:4.80px;top:414.38px;font:400 11.6px/11.6px 'Liberation Sans',sans-serif;color:#1e6e42;transform:scaleX(0.9800);">11</span>
<span class="t" style="left:4.38px;top:435.38px;font:400 11.6px/11.6px 'Liberation Sans',sans-serif;color:#1e6e42;transform:scaleX(0.9800);">12</span>
<span class="t" style="left:4.38px;top:456.38px;font:400 11.6px/11.6px 'Liberation Sans',sans-serif;color:#1e6e42;transform:scaleX(0.9800);">13</span>
<span class="t" style="left:4.38px;top:475.48px;font:400 11.6px/11.6px 'Liberation Sans',sans-serif;color:#262626;transform:scaleX(0.9800);">14</span>
<span class="t" style="left:4.38px;top:493.98px;font:400 11.6px/11.6px 'Liberation Sans',sans-serif;color:#262626;transform:scaleX(0.9800);">15</span>
<span class="t" style="left:4.38px;top:511.98px;font:400 11.6px/11.6px 'Liberation Sans',sans-serif;color:#262626;transform:scaleX(0.9800);">16</span>
<span class="t" style="left:4.38px;top:530.48px;font:400 11.6px/11.6px 'Liberation Sans',sans-serif;color:#262626;transform:scaleX(0.9800);">17</span>
<span class="t" style="left:4.38px;top:548.48px;font:400 11.6px/11.6px 'Liberation Sans',sans-serif;color:#262626;transform:scaleX(0.9800);">18</span>
<span class="t" style="left:4.38px;top:566.98px;font:400 11.6px/11.6px 'Liberation Sans',sans-serif;color:#262626;transform:scaleX(0.9800);">19</span>
<div class="b" style="left:1px;top:581px;width:21px;height:8px;overflow:hidden;"><span class="t" style="left:3.38px;top:3.98px;font:400 11.6px/11.6px 'Liberation Sans',sans-serif;color:#2a2a2a;transform:scaleX(0.9800);">20</span></div>
<span class="t" style="left:84.60px;top:205.88px;font:700 14px/14px 'Liberation Serif',serif;color:#f3cad8;transform:scaleX(1.0412);">OrderDate</span>
<span class="t" style="left:172.00px;top:205.88px;font:700 14px/14px 'Liberation Serif',serif;color:#f3cad8;transform:scaleX(1.0952);">Region</span>
<span class="t" style="left:255.25px;top:205.88px;font:700 14px/14px 'Liberation Serif',serif;color:#f3cad8;transform:scaleX(0.9952);">Rep</span>
<span class="t" style="left:322.15px;top:205.88px;font:700 14px/14px 'Liberation Serif',serif;color:#f3cad8;transform:scaleX(1.1321);">Item</span>
<span class="t" style="left:394.40px;top:205.88px;font:700 14px/14px 'Liberation Serif',serif;color:#f3cad8;transform:scaleX(1.1040);">Units</span>
<span class="t" style="left:477.90px;top:205.88px;font:700 14px/14px 'Liberation Serif',serif;color:#f3cad8;transform:scaleX(1.0940);">UnitCost</span>
<span class="t" style="left:560.00px;top:205.88px;font:700 14px/14px 'Liberation Serif',serif;color:#f3cad8;transform:scaleX(1.1311);">Total</span>
<span class="t" style="left:144.76px;top:230.27px;font:400 11.5px/11.5px 'Liberation Serif',serif;color:#262626;transform:scaleX(1.4163);-webkit-text-stroke:.25px #262626;">2</span><span class="t" style="left:135.81px;top:230.27px;font:400 11.5px/11.5px 'Liberation Serif',serif;color:#262626;transform:scaleX(1.4163);-webkit-text-stroke:.25px #262626;">2</span><span class="t" style="left:125.99px;top:230.27px;font:400 11.5px/11.5px 'Liberation Serif',serif;color:#262626;transform:scaleX(1.5694);-webkit-text-stroke:.25px #262626;">0</span><span class="t" style="left:117.04px;top:230.27px;font:400 11.5px/11.5px 'Liberation Serif',serif;color:#262626;transform:scaleX(1.4163);-webkit-text-stroke:.25px #262626;">2</span><span class="t" style="left:109.84px;top:226.13px;font:400 20.5px/20.5px 'Liberation Serif',serif;color:#262626;transform:scaleX(1.0634);-webkit-text-stroke:.18px #262626;">/</span><span class="t" style="left:100.48px;top:226.08px;font:400 16.5px/16.5px 'Liberation Serif',serif;color:#262626;transform:scaleX(1.0007);-webkit-text-stroke:.18px #262626;">6</span><span class="t" style="left:93.28px;top:226.13px;font:400 20.5px/20.5px 'Liberation Serif',serif;color:#262626;transform:scaleX(1.0634);-webkit-text-stroke:.18px #262626;">/</span><span class="t" style="left:86.12px;top:230.27px;font:400 11.5px/11.5px 'Liberation Serif',serif;color:#262626;transform:scaleX(1.0546);-webkit-text-stroke:.25px #262626;">1</span>
<span class="t" style="left:160.20px;top:226.08px;font:400 16.5px/16.5px 'Liberation Serif',serif;color:#262626;transform:scaleX(1.0436);-webkit-text-stroke:.15px #262626;">East</span>
<span class="t" style="left:237.20px;top:226.08px;font:400 16.5px/16.5px 'Liberation Serif',serif;color:#262626;transform:scaleX(1.0828);-webkit-text-stroke:.15px #262626;">Jones</span>
<span class="t" style="left:304.70px;top:226.08px;font:400 16.5px/16.5px 'Liberation Serif',serif;color:#262626;transform:scaleX(1.0231);-webkit-text-stroke:.15px #262626;">Pencil</span>
<span class="t" style="left:422.25px;top:228.46px;font:400 17px/17px 'Liberation Serif',serif;color:#262626;transform:scaleX(0.8998);-webkit-text-stroke:.18px #262626;">5</span><span class="t" style="left:413.20px;top:228.46px;font:400 17px/17px 'Liberation Serif',serif;color:#262626;transform:scaleX(0.9713);-webkit-text-stroke:.18px #262626;">9</span>
<span class="t" style="left:528.64px;top:228.46px;font:400 17px/17px 'Liberation Serif',serif;color:#262626;transform:scaleX(0.9713);-webkit-text-stroke:.18px #262626;">9</span><span class="t" style="left:519.59px;top:228.46px;font:400 17px/17px 'Liberation Serif',serif;color:#262626;transform:scaleX(0.9713);-webkit-text-stroke:.18px #262626;">9</span><span class="t" style="left:515.58px;top:220.10px;font:400 24px/24px 'Liberation Serif',serif;color:#262626;transform:scaleX(0.4833);-webkit-text-stroke:.3px #262626;">.</span><span class="t" style="left:508.40px;top:230.27px;font:400 11.5px/11.5px 'Liberation Serif',serif;color:#262626;transform:scaleX(1.0546);-webkit-text-stroke:.25px #262626;">1</span>
<span class="t" style="left:588.84px;top:230.27px;font:400 11.5px/11.5px 'Liberation Serif',serif;color:#262626;transform:scaleX(1.0546);-webkit-text-stroke:.25px #262626;">1</span><span class="t" style="left:584.83px;top:220.10px;font:400 24px/24px 'Liberation Serif',serif;color:#262626;transform:scaleX(0.4833);-webkit-text-stroke:.3px #262626;">.</span><span class="t" style="left:575.46px;top:228.46px;font:400 17px/17px 'Liberation Serif',serif;color:#262626;transform:scaleX(0.9713);-webkit-text-stroke:.18px #262626;">9</span><span class="t" style="left:565.92px;top:226.08px;font:400 16.5px/16.5px 'Liberation Serif',serif;color:#262626;transform:scaleX(1.0589);-webkit-text-stroke:.18px #262626;">8</span><span class="t" style="left:559.06px;top:230.27px;font:400 11.5px/11.5px 'Liberation Serif',serif;color:#262626;transform:scaleX(1.0546);-webkit-text-stroke:.25px #262626;">1</span>
<span class="t" style="left:144.76px;top:251.27px;font:400 11.5px/11.5px 'Liberation Serif',serif;color:#262626;transform:scaleX(1.4163);-webkit-text-stroke:.25px #262626;">2</span><span class="t" style="left:135.81px;top:251.27px;font:400 11.5px/11.5px 'Liberation Serif',serif;color:#262626;transform:scaleX(1.4163);-webkit-text-stroke:.25px #262626;">2</span><span class="t" style="left:125.99px;top:251.27px;font:400 11.5px/11.5px 'Liberation Serif',serif;color:#262626;transform:scaleX(1.5694);-webkit-text-stroke:.25px #262626;">0</span><span class="t" style="left:117.04px;top:251.27px;font:400 11.5px/11.5px 'Liberation Serif',serif;color:#262626;transform:scaleX(1.4163);-webkit-text-stroke:.25px #262626;">2</span><span class="t" style="left:109.84px;top:247.13px;font:400 20.5px/20.5px 'Liberation Serif',serif;color:#262626;transform:scaleX(1.0634);-webkit-text-stroke:.18px #262626;">/</span><span class="t" style="left:100.71px;top:249.46px;font:400 17px/17px 'Liberation Serif',serif;color:#262626;transform:scaleX(0.9449);-webkit-text-stroke:.18px #262626;">3</span><span class="t" style="left:91.76px;top:251.27px;font:400 11.5px/11.5px 'Liberation Serif',serif;color:#262626;transform:scaleX(1.4163);-webkit-text-stroke:.25px #262626;">2</span><span class="t" style="left:84.56px;top:247.13px;font:400 20.5px/20.5px 'Liberation Serif',serif;color:#262626;transform:scaleX(1.0634);-webkit-text-stroke:.18px #262626;">/</span><span class="t" style="left:77.40px;top:251.27px;font:400 11.5px/11.5px 'Liberation Serif',serif;color:#262626;transform:scaleX(1.0546);-webkit-text-stroke:.25px #262626;">1</span>
<span class="t" style="left:160.20px;top:247.08px;font:400 16.5px/16.5px 'Liberation Serif',serif;color:#262626;transform:scaleX(1.0492);-webkit-text-stroke:.15px #262626;">Central</span>
<span class="t" style="left:237.20px;top:247.08px;font:400 16.5px/16.5px 'Liberation Serif',serif;color:#262626;transform:scaleX(0.9545);-webkit-text-stroke:.15px #262626;">Kivell</span>
<span class="t" style="left:304.70px;top:247.08px;font:400 16.5px/16.5px 'Liberation Serif',serif;color:#262626;transform:scaleX(1.0421);-webkit-text-stroke:.15px #262626;">Binder</span>
<span class="t" style="left:420.88px;top:251.27px;font:400 11.5px/11.5px 'Liberation Serif',serif;color:#262626;transform:scaleX(1.5694);-webkit-text-stroke:.25px #262626;">0</span><span class="t" style="left:412.43px;top:249.46px;font:400 17px/17px 'Liberation Serif',serif;color:#262626;transform:scaleX(0.8998);-webkit-text-stroke:.18px #262626;">5</span>
<span class="t" style="left:528.64px;top:249.46px;font:400 17px/17px 'Liberation Serif',serif;color:#262626;transform:scaleX(0.9713);-webkit-text-stroke:.18px #262626;">9</span><span class="t" style="left:519.59px;top:249.46px;font:400 17px/17px 'Liberation Serif',serif;color:#262626;transform:scaleX(0.9713);-webkit-text-stroke:.18px #262626;">9</span><span class="t" style="left:515.58px;top:241.10px;font:400 24px/24px 'Liberation Serif',serif;color:#262626;transform:scaleX(0.4833);-webkit-text-stroke:.3px #262626;">.</span><span class="t" style="left:506.21px;top:249.46px;font:400 17px/17px 'Liberation Serif',serif;color:#262626;transform:scaleX(0.9713);-webkit-text-stroke:.18px #262626;">9</span><span class="t" style="left:499.35px;top:251.27px;font:400 11.5px/11.5px 'Liberation Serif',serif;color:#262626;transform:scaleX(1.0546);-webkit-text-stroke:.25px #262626;">1</span>
<span class="t" style="left:587.25px;top:249.46px;font:400 17px/17px 'Liberation Serif',serif;color:#262626;transform:scaleX(0.8998);-webkit-text-stroke:.18px #262626;">5</span><span class="t" style="left:583.24px;top:241.10px;font:400 24px/24px 'Liberation Serif',serif;color:#262626;transform:scaleX(0.4833);-webkit-text-stroke:.3px #262626;">.</span><span class="t" style="left:573.88px;top:249.46px;font:400 17px/17px 'Liberation Serif',serif;color:#262626;transform:scaleX(0.9713);-webkit-text-stroke:.18px #262626;">9</span><span class="t" style="left:564.82px;top:249.46px;font:400 17px/17px 'Liberation Serif',serif;color:#262626;transform:scaleX(0.9713);-webkit-text-stroke:.18px #262626;">9</span><span class="t" style="left:555.76px;top:249.46px;font:400 17px/17px 'Liberation Serif',serif;color:#262626;transform:scaleX(0.9713);-webkit-text-stroke:.18px #262626;">9</span>
<span class="t" style="left:144.76px;top:273.27px;font:400 11.5px/11.5px 'Liberation Serif',serif;color:#262626;transform:scaleX(1.4163);-webkit-text-stroke:.25px #262626;">2</span><span class="t" style="left:135.81px;top:273.27px;font:400 11.5px/11.5px 'Liberation Serif',serif;color:#262626;transform:scaleX(1.4163);-webkit-text-stroke:.25px #262626;">2</span><span class="t" style="left:125.99px;top:273.27px;font:400 11.5px/11.5px 'Liberation Serif',serif;color:#262626;transform:scaleX(1.5694);-webkit-text-stroke:.25px #262626;">0</span><span class="t" style="left:117.04px;top:273.27px;font:400 11.5px/11.5px 'Liberation Serif',serif;color:#262626;transform:scaleX(1.4163);-webkit-text-stroke:.25px #262626;">2</span><span class="t" style="left:109.84px;top:269.13px;font:400 20.5px/20.5px 'Liberation Serif',serif;color:#262626;transform:scaleX(1.0634);-webkit-text-stroke:.18px #262626;">/</span><span class="t" style="left:100.48px;top:271.46px;font:400 17px/17px 'Liberation Serif',serif;color:#262626;transform:scaleX(0.9713);-webkit-text-stroke:.18px #262626;">9</span><span class="t" style="left:93.28px;top:269.13px;font:400 20.5px/20.5px 'Liberation Serif',serif;color:#262626;transform:scaleX(1.0634);-webkit-text-stroke:.18px #262626;">/</span><span class="t" style="left:86.12px;top:273.27px;font:400 11.5px/11.5px 'Liberation Serif',serif;color:#262626;transform:scaleX(1.0546);-webkit-text-stroke:.25px #262626;">1</span>
<span class="t" style="left:160.20px;top:269.08px;font:400 16.5px/16.5px 'Liberation Serif',serif;color:#262626;transform:scaleX(1.0492);-webkit-text-stroke:.15px #262626;">Central</span>
<span class="t" style="left:237.20px;top:269.08px;font:400 16.5px/16.5px 'Liberation Serif',serif;color:#262626;transform:scaleX(1.1061);-webkit-text-stroke:.15px #262626;">Jardine</span>
<span class="t" style="left:304.70px;top:269.08px;font:400 16.5px/16.5px 'Liberation Serif',serif;color:#262626;transform:scaleX(1.0231);-webkit-text-stroke:.15px #262626;">Pencil</span>
<span class="t" style="left:421.64px;top:269.08px;font:400 16.5px/16.5px 'Liberation Serif',serif;color:#262626;transform:scaleX(1.0007);-webkit-text-stroke:.18px #262626;">6</span><span class="t" style="left:412.81px;top:271.46px;font:400 17px/17px 'Liberation Serif',serif;color:#262626;transform:scaleX(0.9449);-webkit-text-stroke:.18px #262626;">3</span>
<span class="t" style="left:528.64px;top:271.46px;font:400 17px/17px 'Liberation Serif',serif;color:#262626;transform:scaleX(0.9713);-webkit-text-stroke:.18px #262626;">9</span><span class="t" style="left:519.59px;top:271.46px;font:400 17px/17px 'Liberation Serif',serif;color:#262626;transform:scaleX(0.9713);-webkit-text-stroke:.18px #262626;">9</span><span class="t" style="left:515.58px;top:263.10px;font:400 24px/24px 'Liberation Serif',serif;color:#262626;transform:scaleX(0.4833);-webkit-text-stroke:.3px #262626;">.</span><span class="t" style="left:506.23px;top:271.46px;font:400 17px/17px 'Liberation Serif',serif;color:#262626;transform:scaleX(0.9694);-webkit-text-stroke:.18px #262626;">4</span>
<span class="t" style="left:586.64px;top:269.08px;font:400 16.5px/16.5px 'Liberation Serif',serif;color:#262626;transform:scaleX(1.0007);-webkit-text-stroke:.18px #262626;">6</span><span class="t" style="left:582.63px;top:263.10px;font:400 24px/24px 'Liberation Serif',serif;color:#262626;transform:scaleX(0.4833);-webkit-text-stroke:.3px #262626;">.</span><span class="t" style="left:573.27px;top:271.46px;font:400 17px/17px 'Liberation Serif',serif;color:#262626;transform:scaleX(0.9713);-webkit-text-stroke:.18px #262626;">9</span><span class="t" style="left:565.24px;top:271.46px;font:400 17px/17px 'Liberation Serif',serif;color:#262626;transform:scaleX(0.8508);-webkit-text-stroke:.18px #262626;">7</span><span class="t" style="left:558.37px;top:273.27px;font:400 11.5px/11.5px 'Liberation Serif',serif;color:#262626;transform:scaleX(1.0546);-webkit-text-stroke:.25px #262626;">1</span>
<span class="t" style="left:144.76px;top:294.27px;font:400 11.5px/11.5px 'Liberation Serif',serif;color:#262626;transform:scaleX(1.4163);-webkit-text-stroke:.25px #262626;">2</span><span class="t" style="left:135.81px;top:294.27px;font:400 11.5px/11.5px 'Liberation Serif',serif;color:#262626;transform:scaleX(1.4163);-webkit-text-stroke:.25px #262626;">2</span><span class="t" style="left:125.99px;top:294.27px;font:400 11.5px/11.5px 'Liberation Serif',serif;color:#262626;transform:scaleX(1.5694);-webkit-text-stroke:.25px #262626;">0</span><span class="t" style="left:117.04px;top:294.27px;font:400 11.5px/11.5px 'Liberation Serif',serif;color:#262626;transform:scaleX(1.4163);-webkit-text-stroke:.25px #262626;">2</span><span class="t" style="left:109.84px;top:290.13px;font:400 20.5px/20.5px 'Liberation Serif',serif;color:#262626;transform:scaleX(1.0634);-webkit-text-stroke:.18px #262626;">/</span><span class="t" style="left:100.48px;top:290.08px;font:400 16.5px/16.5px 'Liberation Serif',serif;color:#262626;transform:scaleX(1.0007);-webkit-text-stroke:.18px #262626;">6</span><span class="t" style="left:91.54px;top:294.27px;font:400 11.5px/11.5px 'Liberation Serif',serif;color:#262626;transform:scaleX(1.4163);-webkit-text-stroke:.25px #262626;">2</span><span class="t" style="left:84.34px;top:290.13px;font:400 20.5px/20.5px 'Liberation Serif',serif;color:#262626;transform:scaleX(1.0634);-webkit-text-stroke:.18px #262626;">/</span><span class="t" style="left:77.17px;top:294.27px;font:400 11.5px/11.5px 'Liberation Serif',serif;color:#262626;transform:scaleX(1.0546);-webkit-text-stroke:.25px #262626;">1</span>
<span class="t" style="left:160.20px;top:290.08px;font:400 16.5px/16.5px 'Liberation Serif',serif;color:#262626;transform:scaleX(1.0492);-webkit-text-stroke:.15px #262626;">Central</span>
<span class="t" style="left:237.20px;top:290.08px;font:400 16.5px/16.5px 'Liberation Serif',serif;color:#262626;transform:scaleX(0.9421);-webkit-text-stroke:.15px #262626;">Gill</span>
<span class="t" style="left:304.70px;top:290.08px;font:400 16.5px/16.5px 'Liberation Serif',serif;color:#262626;transform:scaleX(1.0368);-webkit-text-stroke:.15px #262626;">Pen</span>
<span class="t" style="left:422.67px;top:292.46px;font:400 17px/17px 'Liberation Serif',serif;color:#262626;transform:scaleX(0.8508);-webkit-text-stroke:.18px #262626;">7</span><span class="t" style="left:413.72px;top:294.27px;font:400 11.5px/11.5px 'Liberation Serif',serif;color:#262626;transform:scaleX(1.4163);-webkit-text-stroke:.25px #262626;">2</span>
<span class="t" style="left:528.64px;top:292.46px;font:400 17px/17px 'Liberation Serif',serif;color:#262626;transform:scaleX(0.9713);-webkit-text-stroke:.18px #262626;">9</span><span class="t" style="left:519.59px;top:292.46px;font:400 17px/17px 'Liberation Serif',serif;color:#262626;transform:scaleX(0.9713);-webkit-text-stroke:.18px #262626;">9</span><span class="t" style="left:515.58px;top:284.10px;font:400 24px/24px 'Liberation Serif',serif;color:#262626;transform:scaleX(0.4833);-webkit-text-stroke:.3px #262626;">.</span><span class="t" style="left:506.21px;top:292.46px;font:400 17px/17px 'Liberation Serif',serif;color:#262626;transform:scaleX(0.9713);-webkit-text-stroke:.18px #262626;">9</span><span class="t" style="left:499.35px;top:294.27px;font:400 11.5px/11.5px 'Liberation Serif',serif;color:#262626;transform:scaleX(1.0546);-webkit-text-stroke:.25px #262626;">1</span>
<span class="t" style="left:587.67px;top:292.46px;font:400 17px/17px 'Liberation Serif',serif;color:#262626;transform:scaleX(0.8508);-webkit-text-stroke:.18px #262626;">7</span><span class="t" style="left:583.66px;top:284.10px;font:400 24px/24px 'Liberation Serif',serif;color:#262626;transform:scaleX(0.4833);-webkit-text-stroke:.3px #262626;">.</span><span class="t" style="left:574.29px;top:292.46px;font:400 17px/17px 'Liberation Serif',serif;color:#262626;transform:scaleX(0.9713);-webkit-text-stroke:.18px #262626;">9</span><span class="t" style="left:565.46px;top:292.46px;font:400 17px/17px 'Liberation Serif',serif;color:#262626;transform:scaleX(0.9449);-webkit-text-stroke:.18px #262626;">3</span><span class="t" style="left:557.01px;top:292.46px;font:400 17px/17px 'Liberation Serif',serif;color:#262626;transform:scaleX(0.8998);-webkit-text-stroke:.18px #262626;">5</span>
<span class="t" style="left:144.76px;top:315.27px;font:400 11.5px/11.5px 'Liberation Serif',serif;color:#262626;transform:scaleX(1.4163);-webkit-text-stroke:.25px #262626;">2</span><span class="t" style="left:135.81px;top:315.27px;font:400 11.5px/11.5px 'Liberation Serif',serif;color:#262626;transform:scaleX(1.4163);-webkit-text-stroke:.25px #262626;">2</span><span class="t" style="left:125.99px;top:315.27px;font:400 11.5px/11.5px 'Liberation Serif',serif;color:#262626;transform:scaleX(1.5694);-webkit-text-stroke:.25px #262626;">0</span><span class="t" style="left:117.04px;top:315.27px;font:400 11.5px/11.5px 'Liberation Serif',serif;color:#262626;transform:scaleX(1.4163);-webkit-text-stroke:.25px #262626;">2</span><span class="t" style="left:109.84px;top:311.13px;font:400 20.5px/20.5px 'Liberation Serif',serif;color:#262626;transform:scaleX(1.0634);-webkit-text-stroke:.18px #262626;">/</span><span class="t" style="left:101.09px;top:313.46px;font:400 17px/17px 'Liberation Serif',serif;color:#262626;transform:scaleX(0.8998);-webkit-text-stroke:.18px #262626;">5</span><span class="t" style="left:94.23px;top:315.27px;font:400 11.5px/11.5px 'Liberation Serif',serif;color:#262626;transform:scaleX(1.0546);-webkit-text-stroke:.25px #262626;">1</span><span class="t" style="left:87.02px;top:311.13px;font:400 20.5px/20.5px 'Liberation Serif',serif;color:#262626;transform:scaleX(1.0634);-webkit-text-stroke:.18px #262626;">/</span><span class="t" style="left:79.86px;top:315.27px;font:400 11.5px/11.5px 'Liberation Serif',serif;color:#262626;transform:scaleX(1.0546);-webkit-text-stroke:.25px #262626;">1</span>
<span class="t" style="left:160.20px;top:311.08px;font:400 16.5px/16.5px 'Liberation Serif',serif;color:#262626;transform:scaleX(1.0589);-webkit-text-stroke:.15px #262626;">West</span>
<span class="t" style="left:237.20px;top:311.08px;font:400 16.5px/16.5px 'Liberation Serif',serif;color:#262626;transform:scaleX(1.0255);-webkit-text-stroke:.15px #262626;">Sorvino</span>
<span class="t" style="left:304.70px;top:311.08px;font:400 16.5px/16.5px 'Liberation Serif',serif;color:#262626;transform:scaleX(1.0231);-webkit-text-stroke:.15px #262626;">Pencil</span>
<span class="t" style="left:421.64px;top:311.08px;font:400 16.5px/16.5px 'Liberation Serif',serif;color:#262626;transform:scaleX(1.0007);-webkit-text-stroke:.18px #262626;">6</span><span class="t" style="left:413.20px;top:313.46px;font:400 17px/17px 'Liberation Serif',serif;color:#262626;transform:scaleX(0.8998);-webkit-text-stroke:.18px #262626;">5</span>
<span class="t" style="left:528.64px;top:313.46px;font:400 17px/17px 'Liberation Serif',serif;color:#262626;transform:scaleX(0.9713);-webkit-text-stroke:.18px #262626;">9</span><span class="t" style="left:519.59px;top:313.46px;font:400 17px/17px 'Liberation Serif',serif;color:#262626;transform:scaleX(0.9713);-webkit-text-stroke:.18px #262626;">9</span><span class="t" style="left:515.58px;top:305.10px;font:400 24px/24px 'Liberation Serif',serif;color:#262626;transform:scaleX(0.4833);-webkit-text-stroke:.3px #262626;">.</span><span class="t" style="left:506.32px;top:315.27px;font:400 11.5px/11.5px 'Liberation Serif',serif;color:#262626;transform:scaleX(1.4163);-webkit-text-stroke:.25px #262626;">2</span>
<span class="t" style="left:586.66px;top:313.46px;font:400 17px/17px 'Liberation Serif',serif;color:#262626;transform:scaleX(0.9694);-webkit-text-stroke:.18px #262626;">4</span><span class="t" style="left:582.65px;top:305.10px;font:400 24px/24px 'Liberation Serif',serif;color:#262626;transform:scaleX(0.4833);-webkit-text-stroke:.3px #262626;">.</span><span class="t" style="left:574.31px;top:313.46px;font:400 17px/17px 'Liberation Serif',serif;color:#262626;transform:scaleX(0.8508);-webkit-text-stroke:.18px #262626;">7</span><span class="t" style="left:565.25px;top:311.08px;font:400 16.5px/16.5px 'Liberation Serif',serif;color:#262626;transform:scaleX(1.0007);-webkit-text-stroke:.18px #262626;">6</span><span class="t" style="left:558.39px;top:315.27px;font:400 11.5px/11.5px 'Liberation Serif',serif;color:#262626;transform:scaleX(1.0546);-webkit-text-stroke:.25px #262626;">1</span>
<span class="t" style="left:144.76px;top:336.27px;font:400 11.5px/11.5px 'Liberation Serif',serif;color:#262626;transform:scaleX(1.4163);-webkit-text-stroke:.25px #262626;">2</span><span class="t" style="left:135.81px;top:336.27px;font:400 11.5px/11.5px 'Liberation Serif',serif;color:#262626;transform:scaleX(1.4163);-webkit-text-stroke:.25px #262626;">2</span><span class="t" style="left:125.99px;top:336.27px;font:400 11.5px/11.5px 'Liberation Serif',serif;color:#262626;transform:scaleX(1.5694);-webkit-text-stroke:.25px #262626;">0</span><span class="t" style="left:117.04px;top:336.27px;font:400 11.5px/11.5px 'Liberation Serif',serif;color:#262626;transform:scaleX(1.4163);-webkit-text-stroke:.25px #262626;">2</span><span class="t" style="left:109.84px;top:332.13px;font:400 20.5px/20.5px 'Liberation Serif',serif;color:#262626;transform:scaleX(1.0634);-webkit-text-stroke:.18px #262626;">/</span><span class="t" style="left:102.68px;top:336.27px;font:400 11.5px/11.5px 'Liberation Serif',serif;color:#262626;transform:scaleX(1.0546);-webkit-text-stroke:.25px #262626;">1</span><span class="t" style="left:95.47px;top:332.13px;font:400 20.5px/20.5px 'Liberation Serif',serif;color:#262626;transform:scaleX(1.0634);-webkit-text-stroke:.18px #262626;">/</span><span class="t" style="left:88.31px;top:336.27px;font:400 11.5px/11.5px 'Liberation Serif',serif;color:#262626;transform:scaleX(1.0546);-webkit-text-stroke:.25px #262626;">1</span>
<span class="t" style="left:160.20px;top:332.08px;font:400 16.5px/16.5px 'Liberation Serif',serif;color:#262626;transform:scaleX(1.0436);-webkit-text-stroke:.15px #262626;">East</span>
<span class="t" style="left:237.20px;top:332.08px;font:400 16.5px/16.5px 'Liberation Serif',serif;color:#262626;transform:scaleX(1.0828);-webkit-text-stroke:.15px #262626;">Jones</span>
<span class="t" style="left:304.70px;top:332.08px;font:400 16.5px/16.5px 'Liberation Serif',serif;color:#262626;transform:scaleX(1.0421);-webkit-text-stroke:.15px #262626;">Binder</span>
<span class="t" style="left:420.88px;top:336.27px;font:400 11.5px/11.5px 'Liberation Serif',serif;color:#262626;transform:scaleX(1.5694);-webkit-text-stroke:.25px #262626;">0</span><span class="t" style="left:411.82px;top:332.08px;font:400 16.5px/16.5px 'Liberation Serif',serif;color:#262626;transform:scaleX(1.0007);-webkit-text-stroke:.18px #262626;">6</span>
<span class="t" style="left:528.64px;top:334.46px;font:400 17px/17px 'Liberation Serif',serif;color:#262626;transform:scaleX(0.9713);-webkit-text-stroke:.18px #262626;">9</span><span class="t" style="left:519.59px;top:334.46px;font:400 17px/17px 'Liberation Serif',serif;color:#262626;transform:scaleX(0.9713);-webkit-text-stroke:.18px #262626;">9</span><span class="t" style="left:515.58px;top:326.10px;font:400 24px/24px 'Liberation Serif',serif;color:#262626;transform:scaleX(0.4833);-webkit-text-stroke:.3px #262626;">.</span><span class="t" style="left:506.23px;top:334.46px;font:400 17px/17px 'Liberation Serif',serif;color:#262626;transform:scaleX(0.9694);-webkit-text-stroke:.18px #262626;">4</span>
<span class="t" style="left:586.66px;top:334.46px;font:400 17px/17px 'Liberation Serif',serif;color:#262626;transform:scaleX(0.9694);-webkit-text-stroke:.18px #262626;">4</span><span class="t" style="left:582.65px;top:326.10px;font:400 24px/24px 'Liberation Serif',serif;color:#262626;transform:scaleX(0.4833);-webkit-text-stroke:.3px #262626;">.</span><span class="t" style="left:573.28px;top:334.46px;font:400 17px/17px 'Liberation Serif',serif;color:#262626;transform:scaleX(0.9713);-webkit-text-stroke:.18px #262626;">9</span><span class="t" style="left:564.23px;top:334.46px;font:400 17px/17px 'Liberation Serif',serif;color:#262626;transform:scaleX(0.9713);-webkit-text-stroke:.18px #262626;">9</span><span class="t" style="left:555.28px;top:336.27px;font:400 11.5px/11.5px 'Liberation Serif',serif;color:#262626;transform:scaleX(1.4163);-webkit-text-stroke:.25px #262626;">2</span>
<span class="t" style="left:144.76px;top:354.27px;font:400 11.5px/11.5px 'Liberation Serif',serif;color:#262626;transform:scaleX(1.4163);-webkit-text-stroke:.25px #262626;">2</span><span class="t" style="left:135.81px;top:354.27px;font:400 11.5px/11.5px 'Liberation Serif',serif;color:#262626;transform:scaleX(1.4163);-webkit-text-stroke:.25px #262626;">2</span><span class="t" style="left:125.99px;top:354.27px;font:400 11.5px/11.5px 'Liberation Serif',serif;color:#262626;transform:scaleX(1.5694);-webkit-text-stroke:.25px #262626;">0</span><span class="t" style="left:117.04px;top:354.27px;font:400 11.5px/11.5px 'Liberation Serif',serif;color:#262626;transform:scaleX(1.4163);-webkit-text-stroke:.25px #262626;">2</span><span class="t" style="left:109.84px;top:350.13px;font:400 20.5px/20.5px 'Liberation Serif',serif;color:#262626;transform:scaleX(1.0634);-webkit-text-stroke:.18px #262626;">/</span><span class="t" style="left:100.00px;top:350.08px;font:400 16.5px/16.5px 'Liberation Serif',serif;color:#262626;transform:scaleX(1.0589);-webkit-text-stroke:.18px #262626;">8</span><span class="t" style="left:93.14px;top:354.27px;font:400 11.5px/11.5px 'Liberation Serif',serif;color:#262626;transform:scaleX(1.0546);-webkit-text-stroke:.25px #262626;">1</span><span class="t" style="left:85.94px;top:350.13px;font:400 20.5px/20.5px 'Liberation Serif',serif;color:#262626;transform:scaleX(1.0634);-webkit-text-stroke:.18px #262626;">/</span><span class="t" style="left:78.77px;top:354.27px;font:400 11.5px/11.5px 'Liberation Serif',serif;color:#262626;transform:scaleX(1.0546);-webkit-text-stroke:.25px #262626;">1</span>
<span class="t" style="left:160.20px;top:350.08px;font:400 16.5px/16.5px 'Liberation Serif',serif;color:#262626;transform:scaleX(1.0492);-webkit-text-stroke:.15px #262626;">Central</span>
<span class="t" style="left:237.20px;top:350.08px;font:400 16.5px/16.5px 'Liberation Serif',serif;color:#262626;transform:scaleX(1.0260);-webkit-text-stroke:.15px #262626;">Andrews</span>
<span class="t" style="left:304.70px;top:350.08px;font:400 16.5px/16.5px 'Liberation Serif',serif;color:#262626;transform:scaleX(1.0231);-webkit-text-stroke:.15px #262626;">Pencil</span>
<span class="t" style="left:422.25px;top:352.46px;font:400 17px/17px 'Liberation Serif',serif;color:#262626;transform:scaleX(0.8998);-webkit-text-stroke:.18px #262626;">5</span><span class="t" style="left:414.22px;top:352.46px;font:400 17px/17px 'Liberation Serif',serif;color:#262626;transform:scaleX(0.8508);-webkit-text-stroke:.18px #262626;">7</span>
<span class="t" style="left:528.64px;top:352.46px;font:400 17px/17px 'Liberation Serif',serif;color:#262626;transform:scaleX(0.9713);-webkit-text-stroke:.18px #262626;">9</span><span class="t" style="left:519.59px;top:352.46px;font:400 17px/17px 'Liberation Serif',serif;color:#262626;transform:scaleX(0.9713);-webkit-text-stroke:.18px #262626;">9</span><span class="t" style="left:515.58px;top:344.10px;font:400 24px/24px 'Liberation Serif',serif;color:#262626;transform:scaleX(0.4833);-webkit-text-stroke:.3px #262626;">.</span><span class="t" style="left:508.40px;top:354.27px;font:400 11.5px/11.5px 'Liberation Serif',serif;color:#262626;transform:scaleX(1.0546);-webkit-text-stroke:.25px #262626;">1</span>
<span class="t" style="left:586.87px;top:352.46px;font:400 17px/17px 'Liberation Serif',serif;color:#262626;transform:scaleX(0.9449);-webkit-text-stroke:.18px #262626;">3</span><span class="t" style="left:582.86px;top:344.10px;font:400 24px/24px 'Liberation Serif',serif;color:#262626;transform:scaleX(0.4833);-webkit-text-stroke:.3px #262626;">.</span><span class="t" style="left:573.49px;top:352.46px;font:400 17px/17px 'Liberation Serif',serif;color:#262626;transform:scaleX(0.9713);-webkit-text-stroke:.18px #262626;">9</span><span class="t" style="left:564.45px;top:352.46px;font:400 17px/17px 'Liberation Serif',serif;color:#262626;transform:scaleX(0.9694);-webkit-text-stroke:.18px #262626;">4</span><span class="t" style="left:557.59px;top:354.27px;font:400 11.5px/11.5px 'Liberation Serif',serif;color:#262626;transform:scaleX(1.0546);-webkit-text-stroke:.25px #262626;">1</span>
<span class="t" style="left:144.76px;top:374.27px;font:400 11.5px/11.5px 'Liberation Serif',serif;color:#262626;transform:scaleX(1.4163);-webkit-text-stroke:.25px #262626;">2</span><span class="t" style="left:135.81px;top:374.27px;font:400 11.5px/11.5px 'Liberation Serif',serif;color:#262626;transform:scaleX(1.4163);-webkit-text-stroke:.25px #262626;">2</span><span class="t" style="left:125.99px;top:374.27px;font:400 11.5px/11.5px 'Liberation Serif',serif;color:#262626;transform:scaleX(1.5694);-webkit-text-stroke:.25px #262626;">0</span><span class="t" style="left:117.04px;top:374.27px;font:400 11.5px/11.5px 'Liberation Serif',serif;color:#262626;transform:scaleX(1.4163);-webkit-text-stroke:.25px #262626;">2</span><span class="t" style="left:109.84px;top:370.13px;font:400 20.5px/20.5px 'Liberation Serif',serif;color:#262626;transform:scaleX(1.0634);-webkit-text-stroke:.18px #262626;">/</span><span class="t" style="left:101.09px;top:372.46px;font:400 17px/17px 'Liberation Serif',serif;color:#262626;transform:scaleX(0.8998);-webkit-text-stroke:.18px #262626;">5</span><span class="t" style="left:93.89px;top:370.13px;font:400 20.5px/20.5px 'Liberation Serif',serif;color:#262626;transform:scaleX(1.0634);-webkit-text-stroke:.18px #262626;">/</span><span class="t" style="left:86.72px;top:374.27px;font:400 11.5px/11.5px 'Liberation Serif',serif;color:#262626;transform:scaleX(1.0546);-webkit-text-stroke:.25px #262626;">1</span>
<span class="t" style="left:160.20px;top:370.08px;font:400 16.5px/16.5px 'Liberation Serif',serif;color:#262626;transform:scaleX(1.0492);-webkit-text-stroke:.15px #262626;">Central</span>
<span class="t" style="left:237.20px;top:370.08px;font:400 16.5px/16.5px 'Liberation Serif',serif;color:#262626;transform:scaleX(1.1061);-webkit-text-stroke:.15px #262626;">Jardine</span>
<span class="t" style="left:304.70px;top:370.08px;font:400 16.5px/16.5px 'Liberation Serif',serif;color:#262626;transform:scaleX(1.0231);-webkit-text-stroke:.15px #262626;">Pencil</span>
<span class="t" style="left:420.88px;top:374.27px;font:400 11.5px/11.5px 'Liberation Serif',serif;color:#262626;transform:scaleX(1.5694);-webkit-text-stroke:.25px #262626;">0</span><span class="t" style="left:411.82px;top:372.46px;font:400 17px/17px 'Liberation Serif',serif;color:#262626;transform:scaleX(0.9713);-webkit-text-stroke:.18px #262626;">9</span>
<span class="t" style="left:528.64px;top:372.46px;font:400 17px/17px 'Liberation Serif',serif;color:#262626;transform:scaleX(0.9713);-webkit-text-stroke:.18px #262626;">9</span><span class="t" style="left:519.59px;top:372.46px;font:400 17px/17px 'Liberation Serif',serif;color:#262626;transform:scaleX(0.9713);-webkit-text-stroke:.18px #262626;">9</span><span class="t" style="left:515.58px;top:364.10px;font:400 24px/24px 'Liberation Serif',serif;color:#262626;transform:scaleX(0.4833);-webkit-text-stroke:.3px #262626;">.</span><span class="t" style="left:506.23px;top:372.46px;font:400 17px/17px 'Liberation Serif',serif;color:#262626;transform:scaleX(0.9694);-webkit-text-stroke:.18px #262626;">4</span>
<span class="t" style="left:588.84px;top:374.27px;font:400 11.5px/11.5px 'Liberation Serif',serif;color:#262626;transform:scaleX(1.0546);-webkit-text-stroke:.25px #262626;">1</span><span class="t" style="left:584.83px;top:364.10px;font:400 24px/24px 'Liberation Serif',serif;color:#262626;transform:scaleX(0.4833);-webkit-text-stroke:.3px #262626;">.</span><span class="t" style="left:575.46px;top:372.46px;font:400 17px/17px 'Liberation Serif',serif;color:#262626;transform:scaleX(0.9713);-webkit-text-stroke:.18px #262626;">9</span><span class="t" style="left:566.42px;top:372.46px;font:400 17px/17px 'Liberation Serif',serif;color:#262626;transform:scaleX(0.9694);-webkit-text-stroke:.18px #262626;">4</span><span class="t" style="left:557.38px;top:372.46px;font:400 17px/17px 'Liberation Serif',serif;color:#262626;transform:scaleX(0.9694);-webkit-text-stroke:.18px #262626;">4</span>
<span class="t" style="left:144.76px;top:393.27px;font:400 11.5px/11.5px 'Liberation Serif',serif;color:#262626;transform:scaleX(1.4163);-webkit-text-stroke:.25px #262626;">2</span><span class="t" style="left:135.81px;top:393.27px;font:400 11.5px/11.5px 'Liberation Serif',serif;color:#262626;transform:scaleX(1.4163);-webkit-text-stroke:.25px #262626;">2</span><span class="t" style="left:125.99px;top:393.27px;font:400 11.5px/11.5px 'Liberation Serif',serif;color:#262626;transform:scaleX(1.5694);-webkit-text-stroke:.25px #262626;">0</span><span class="t" style="left:117.04px;top:393.27px;font:400 11.5px/11.5px 'Liberation Serif',serif;color:#262626;transform:scaleX(1.4163);-webkit-text-stroke:.25px #262626;">2</span><span class="t" style="left:109.84px;top:389.13px;font:400 20.5px/20.5px 'Liberation Serif',serif;color:#262626;transform:scaleX(1.0634);-webkit-text-stroke:.18px #262626;">/</span><span class="t" style="left:100.60px;top:393.27px;font:400 11.5px/11.5px 'Liberation Serif',serif;color:#262626;transform:scaleX(1.4163);-webkit-text-stroke:.25px #262626;">2</span><span class="t" style="left:91.65px;top:393.27px;font:400 11.5px/11.5px 'Liberation Serif',serif;color:#262626;transform:scaleX(1.4163);-webkit-text-stroke:.25px #262626;">2</span><span class="t" style="left:84.45px;top:389.13px;font:400 20.5px/20.5px 'Liberation Serif',serif;color:#262626;transform:scaleX(1.0634);-webkit-text-stroke:.18px #262626;">/</span><span class="t" style="left:77.28px;top:393.27px;font:400 11.5px/11.5px 'Liberation Serif',serif;color:#262626;transform:scaleX(1.0546);-webkit-text-stroke:.25px #262626;">1</span>
<span class="t" style="left:160.20px;top:389.08px;font:400 16.5px/16.5px 'Liberation Serif',serif;color:#262626;transform:scaleX(1.0589);-webkit-text-stroke:.15px #262626;">West</span>
<span class="t" style="left:237.20px;top:389.08px;font:400 16.5px/16.5px 'Liberation Serif',serif;color:#262626;transform:scaleX(1.0476);-webkit-text-stroke:.15px #262626;">Thomps</span>
<span class="t" style="left:304.70px;top:389.08px;font:400 16.5px/16.5px 'Liberation Serif',serif;color:#262626;transform:scaleX(1.0231);-webkit-text-stroke:.15px #262626;">Pencil</span>
<span class="t" style="left:421.76px;top:393.27px;font:400 11.5px/11.5px 'Liberation Serif',serif;color:#262626;transform:scaleX(1.4163);-webkit-text-stroke:.25px #262626;">2</span><span class="t" style="left:412.92px;top:391.46px;font:400 17px/17px 'Liberation Serif',serif;color:#262626;transform:scaleX(0.9449);-webkit-text-stroke:.18px #262626;">3</span>
<span class="t" style="left:528.64px;top:391.46px;font:400 17px/17px 'Liberation Serif',serif;color:#262626;transform:scaleX(0.9713);-webkit-text-stroke:.18px #262626;">9</span><span class="t" style="left:519.59px;top:391.46px;font:400 17px/17px 'Liberation Serif',serif;color:#262626;transform:scaleX(0.9713);-webkit-text-stroke:.18px #262626;">9</span><span class="t" style="left:515.58px;top:383.10px;font:400 24px/24px 'Liberation Serif',serif;color:#262626;transform:scaleX(0.4833);-webkit-text-stroke:.3px #262626;">.</span><span class="t" style="left:508.40px;top:393.27px;font:400 11.5px/11.5px 'Liberation Serif',serif;color:#262626;transform:scaleX(1.0546);-webkit-text-stroke:.25px #262626;">1</span>
<span class="t" style="left:586.16px;top:389.08px;font:400 16.5px/16.5px 'Liberation Serif',serif;color:#262626;transform:scaleX(1.0589);-webkit-text-stroke:.18px #262626;">8</span><span class="t" style="left:577.11px;top:389.08px;font:400 16.5px/16.5px 'Liberation Serif',serif;color:#262626;transform:scaleX(1.0007);-webkit-text-stroke:.18px #262626;">6</span><span class="t" style="left:573.10px;top:383.10px;font:400 24px/24px 'Liberation Serif',serif;color:#262626;transform:scaleX(0.4833);-webkit-text-stroke:.3px #262626;">.</span><span class="t" style="left:563.96px;top:391.46px;font:400 17px/17px 'Liberation Serif',serif;color:#262626;transform:scaleX(0.9449);-webkit-text-stroke:.18px #262626;">3</span><span class="t" style="left:554.90px;top:389.08px;font:400 16.5px/16.5px 'Liberation Serif',serif;color:#262626;transform:scaleX(1.0007);-webkit-text-stroke:.18px #262626;">6</span>
<span class="t" style="left:144.76px;top:414.27px;font:400 11.5px/11.5px 'Liberation Serif',serif;color:#262626;transform:scaleX(1.4163);-webkit-text-stroke:.25px #262626;">2</span><span class="t" style="left:135.81px;top:414.27px;font:400 11.5px/11.5px 'Liberation Serif',serif;color:#262626;transform:scaleX(1.4163);-webkit-text-stroke:.25px #262626;">2</span><span class="t" style="left:125.99px;top:414.27px;font:400 11.5px/11.5px 'Liberation Serif',serif;color:#262626;transform:scaleX(1.5694);-webkit-text-stroke:.25px #262626;">0</span><span class="t" style="left:117.04px;top:414.27px;font:400 11.5px/11.5px 'Liberation Serif',serif;color:#262626;transform:scaleX(1.4163);-webkit-text-stroke:.25px #262626;">2</span><span class="t" style="left:109.84px;top:410.13px;font:400 20.5px/20.5px 'Liberation Serif',serif;color:#262626;transform:scaleX(1.0634);-webkit-text-stroke:.18px #262626;">/</span><span class="t" style="left:100.00px;top:410.08px;font:400 16.5px/16.5px 'Liberation Serif',serif;color:#262626;transform:scaleX(1.0589);-webkit-text-stroke:.18px #262626;">8</span><span class="t" style="left:92.80px;top:410.13px;font:400 20.5px/20.5px 'Liberation Serif',serif;color:#262626;transform:scaleX(1.0634);-webkit-text-stroke:.18px #262626;">/</span><span class="t" style="left:85.64px;top:414.27px;font:400 11.5px/11.5px 'Liberation Serif',serif;color:#262626;transform:scaleX(1.0546);-webkit-text-stroke:.25px #262626;">1</span>
<span class="t" style="left:160.20px;top:410.08px;font:400 16.5px/16.5px 'Liberation Serif',serif;color:#262626;transform:scaleX(1.0436);-webkit-text-stroke:.15px #262626;">East</span>
<span class="t" style="left:237.20px;top:410.08px;font:400 16.5px/16.5px 'Liberation Serif',serif;color:#262626;transform:scaleX(1.0828);-webkit-text-stroke:.15px #262626;">Jones</span>
<span class="t" style="left:304.70px;top:410.08px;font:400 16.5px/16.5px 'Liberation Serif',serif;color:#262626;transform:scaleX(1.0421);-webkit-text-stroke:.15px #262626;">Binder</span>
<span class="t" style="left:420.88px;top:414.27px;font:400 11.5px/11.5px 'Liberation Serif',serif;color:#262626;transform:scaleX(1.5694);-webkit-text-stroke:.25px #262626;">0</span><span class="t" style="left:411.82px;top:410.08px;font:400 16.5px/16.5px 'Liberation Serif',serif;color:#262626;transform:scaleX(1.0007);-webkit-text-stroke:.18px #262626;">6</span>
<span class="t" style="left:528.64px;top:412.46px;font:400 17px/17px 'Liberation Serif',serif;color:#262626;transform:scaleX(0.9713);-webkit-text-stroke:.18px #262626;">9</span><span class="t" style="left:519.59px;top:412.46px;font:400 17px/17px 'Liberation Serif',serif;color:#262626;transform:scaleX(0.9713);-webkit-text-stroke:.18px #262626;">9</span><span class="t" style="left:515.58px;top:404.10px;font:400 24px/24px 'Liberation Serif',serif;color:#262626;transform:scaleX(0.4833);-webkit-text-stroke:.3px #262626;">.</span><span class="t" style="left:505.73px;top:410.08px;font:400 16.5px/16.5px 'Liberation Serif',serif;color:#262626;transform:scaleX(1.0589);-webkit-text-stroke:.18px #262626;">8</span>
<span class="t" style="left:586.66px;top:412.46px;font:400 17px/17px 'Liberation Serif',serif;color:#262626;transform:scaleX(0.9694);-webkit-text-stroke:.18px #262626;">4</span><span class="t" style="left:582.65px;top:404.10px;font:400 24px/24px 'Liberation Serif',serif;color:#262626;transform:scaleX(0.4833);-webkit-text-stroke:.3px #262626;">.</span><span class="t" style="left:573.28px;top:412.46px;font:400 17px/17px 'Liberation Serif',serif;color:#262626;transform:scaleX(0.9713);-webkit-text-stroke:.18px #262626;">9</span><span class="t" style="left:564.45px;top:412.46px;font:400 17px/17px 'Liberation Serif',serif;color:#262626;transform:scaleX(0.9449);-webkit-text-stroke:.18px #262626;">3</span><span class="t" style="left:556.00px;top:412.46px;font:400 17px/17px 'Liberation Serif',serif;color:#262626;transform:scaleX(0.8998);-webkit-text-stroke:.18px #262626;">5</span>
<span class="t" style="left:144.76px;top:435.27px;font:400 11.5px/11.5px 'Liberation Serif',serif;color:#262626;transform:scaleX(1.4163);-webkit-text-stroke:.25px #262626;">2</span><span class="t" style="left:135.81px;top:435.27px;font:400 11.5px/11.5px 'Liberation Serif',serif;color:#262626;transform:scaleX(1.4163);-webkit-text-stroke:.25px #262626;">2</span><span class="t" style="left:125.99px;top:435.27px;font:400 11.5px/11.5px 'Liberation Serif',serif;color:#262626;transform:scaleX(1.5694);-webkit-text-stroke:.25px #262626;">0</span><span class="t" style="left:117.04px;top:435.27px;font:400 11.5px/11.5px 'Liberation Serif',serif;color:#262626;transform:scaleX(1.4163);-webkit-text-stroke:.25px #262626;">2</span><span class="t" style="left:109.84px;top:431.13px;font:400 20.5px/20.5px 'Liberation Serif',serif;color:#262626;transform:scaleX(1.0634);-webkit-text-stroke:.18px #262626;">/</span><span class="t" style="left:101.09px;top:433.46px;font:400 17px/17px 'Liberation Serif',serif;color:#262626;transform:scaleX(0.8998);-webkit-text-stroke:.18px #262626;">5</span><span class="t" style="left:92.15px;top:435.27px;font:400 11.5px/11.5px 'Liberation Serif',serif;color:#262626;transform:scaleX(1.4163);-webkit-text-stroke:.25px #262626;">2</span><span class="t" style="left:84.94px;top:431.13px;font:400 20.5px/20.5px 'Liberation Serif',serif;color:#262626;transform:scaleX(1.0634);-webkit-text-stroke:.18px #262626;">/</span><span class="t" style="left:77.78px;top:435.27px;font:400 11.5px/11.5px 'Liberation Serif',serif;color:#262626;transform:scaleX(1.0546);-webkit-text-stroke:.25px #262626;">1</span>
<span class="t" style="left:160.20px;top:431.08px;font:400 16.5px/16.5px 'Liberation Serif',serif;color:#262626;transform:scaleX(1.0492);-webkit-text-stroke:.15px #262626;">Central</span>
<span class="t" style="left:237.20px;top:431.08px;font:400 16.5px/16.5px 'Liberation Serif',serif;color:#262626;transform:scaleX(1.0477);-webkit-text-stroke:.15px #262626;">Morgan</span>
<span class="t" style="left:304.70px;top:431.08px;font:400 16.5px/16.5px 'Liberation Serif',serif;color:#262626;transform:scaleX(1.0231);-webkit-text-stroke:.15px #262626;">Pencil</span>
<span class="t" style="left:420.88px;top:435.27px;font:400 11.5px/11.5px 'Liberation Serif',serif;color:#262626;transform:scaleX(1.5694);-webkit-text-stroke:.25px #262626;">0</span><span class="t" style="left:411.82px;top:433.46px;font:400 17px/17px 'Liberation Serif',serif;color:#262626;transform:scaleX(0.9713);-webkit-text-stroke:.18px #262626;">9</span>
<span class="t" style="left:528.64px;top:433.46px;font:400 17px/17px 'Liberation Serif',serif;color:#262626;transform:scaleX(0.9713);-webkit-text-stroke:.18px #262626;">9</span><span class="t" style="left:519.59px;top:433.46px;font:400 17px/17px 'Liberation Serif',serif;color:#262626;transform:scaleX(0.9713);-webkit-text-stroke:.18px #262626;">9</span><span class="t" style="left:515.58px;top:425.10px;font:400 24px/24px 'Liberation Serif',serif;color:#262626;transform:scaleX(0.4833);-webkit-text-stroke:.3px #262626;">.</span><span class="t" style="left:506.23px;top:433.46px;font:400 17px/17px 'Liberation Serif',serif;color:#262626;transform:scaleX(0.9694);-webkit-text-stroke:.18px #262626;">4</span>
<span class="t" style="left:588.84px;top:435.27px;font:400 11.5px/11.5px 'Liberation Serif',serif;color:#262626;transform:scaleX(1.0546);-webkit-text-stroke:.25px #262626;">1</span><span class="t" style="left:584.83px;top:425.10px;font:400 24px/24px 'Liberation Serif',serif;color:#262626;transform:scaleX(0.4833);-webkit-text-stroke:.3px #262626;">.</span><span class="t" style="left:575.46px;top:433.46px;font:400 17px/17px 'Liberation Serif',serif;color:#262626;transform:scaleX(0.9713);-webkit-text-stroke:.18px #262626;">9</span><span class="t" style="left:566.42px;top:433.46px;font:400 17px/17px 'Liberation Serif',serif;color:#262626;transform:scaleX(0.9694);-webkit-text-stroke:.18px #262626;">4</span><span class="t" style="left:557.38px;top:433.46px;font:400 17px/17px 'Liberation Serif',serif;color:#262626;transform:scaleX(0.9694);-webkit-text-stroke:.18px #262626;">4</span>
<span class="t" style="left:144.76px;top:456.27px;font:400 11.5px/11.5px 'Liberation Serif',serif;color:#262626;transform:scaleX(1.4163);-webkit-text-stroke:.25px #262626;">2</span><span class="t" style="left:135.81px;top:456.27px;font:400 11.5px/11.5px 'Liberation Serif',serif;color:#262626;transform:scaleX(1.4163);-webkit-text-stroke:.25px #262626;">2</span><span class="t" style="left:125.99px;top:456.27px;font:400 11.5px/11.5px 'Liberation Serif',serif;color:#262626;transform:scaleX(1.5694);-webkit-text-stroke:.25px #262626;">0</span><span class="t" style="left:117.04px;top:456.27px;font:400 11.5px/11.5px 'Liberation Serif',serif;color:#262626;transform:scaleX(1.4163);-webkit-text-stroke:.25px #262626;">2</span><span class="t" style="left:109.84px;top:452.13px;font:400 20.5px/20.5px 'Liberation Serif',serif;color:#262626;transform:scaleX(1.0634);-webkit-text-stroke:.18px #262626;">/</span><span class="t" style="left:100.60px;top:456.27px;font:400 11.5px/11.5px 'Liberation Serif',serif;color:#262626;transform:scaleX(1.4163);-webkit-text-stroke:.25px #262626;">2</span><span class="t" style="left:93.73px;top:456.27px;font:400 11.5px/11.5px 'Liberation Serif',serif;color:#262626;transform:scaleX(1.0546);-webkit-text-stroke:.25px #262626;">1</span><span class="t" style="left:86.53px;top:452.13px;font:400 20.5px/20.5px 'Liberation Serif',serif;color:#262626;transform:scaleX(1.0634);-webkit-text-stroke:.18px #262626;">/</span><span class="t" style="left:79.36px;top:456.27px;font:400 11.5px/11.5px 'Liberation Serif',serif;color:#262626;transform:scaleX(1.0546);-webkit-text-stroke:.25px #262626;">1</span>
<span class="t" style="left:160.20px;top:452.08px;font:400 16.5px/16.5px 'Liberation Serif',serif;color:#262626;transform:scaleX(1.0436);-webkit-text-stroke:.15px #262626;">East</span>
<span class="t" style="left:237.20px;top:452.08px;font:400 16.5px/16.5px 'Liberation Serif',serif;color:#262626;transform:scaleX(1.0531);-webkit-text-stroke:.15px #262626;">Howard</span>
<span class="t" style="left:304.70px;top:452.08px;font:400 16.5px/16.5px 'Liberation Serif',serif;color:#262626;transform:scaleX(1.0421);-webkit-text-stroke:.15px #262626;">Binder</span>
<span class="t" style="left:421.64px;top:454.46px;font:400 17px/17px 'Liberation Serif',serif;color:#262626;transform:scaleX(0.9713);-webkit-text-stroke:.18px #262626;">9</span><span class="t" style="left:412.70px;top:456.27px;font:400 11.5px/11.5px 'Liberation Serif',serif;color:#262626;transform:scaleX(1.4163);-webkit-text-stroke:.25px #262626;">2</span>
<span class="t" style="left:528.64px;top:454.46px;font:400 17px/17px 'Liberation Serif',serif;color:#262626;transform:scaleX(0.9713);-webkit-text-stroke:.18px #262626;">9</span><span class="t" style="left:519.59px;top:454.46px;font:400 17px/17px 'Liberation Serif',serif;color:#262626;transform:scaleX(0.9713);-webkit-text-stroke:.18px #262626;">9</span><span class="t" style="left:515.58px;top:446.10px;font:400 24px/24px 'Liberation Serif',serif;color:#262626;transform:scaleX(0.4833);-webkit-text-stroke:.3px #262626;">.</span><span class="t" style="left:508.40px;top:456.27px;font:400 11.5px/11.5px 'Liberation Serif',serif;color:#262626;transform:scaleX(1.0546);-webkit-text-stroke:.25px #262626;">1</span>
<span class="t" style="left:587.67px;top:454.46px;font:400 17px/17px 'Liberation Serif',serif;color:#262626;transform:scaleX(0.8508);-webkit-text-stroke:.18px #262626;">7</span><span class="t" style="left:583.66px;top:446.10px;font:400 24px/24px 'Liberation Serif',serif;color:#262626;transform:scaleX(0.4833);-webkit-text-stroke:.3px #262626;">.</span><span class="t" style="left:575.32px;top:454.46px;font:400 17px/17px 'Liberation Serif',serif;color:#262626;transform:scaleX(0.8508);-webkit-text-stroke:.18px #262626;">7</span><span class="t" style="left:566.87px;top:454.46px;font:400 17px/17px 'Liberation Serif',serif;color:#262626;transform:scaleX(0.8998);-webkit-text-stroke:.18px #262626;">5</span>
<div class="b" style="left:733px;top:188px;width:12px;height:11px;background:#fff;border:1px solid #ababab;"></div>
<svg class="b" style="left:737px;top:192.8px;" width="6" height="4" viewBox="0 0 6 4"><path d="M0 3.500L3 0l3 3.500z" fill="#555"/></svg>
<div class="b" style="left:733px;top:201px;width:12px;height:354px;background:#fff;border:1px solid #ababab;border-top:none;"></div>
<div class="b" style="left:733px;top:556px;width:14px;height:20px;background:#d0d0d0;"></div>
<div class="b" style="left:733px;top:576px;width:12px;height:12px;background:#fff;border:1px solid #ababab;"></div>
<svg class="b" style="left:737px;top:581px;" width="6" height="4" viewBox="0 0 6 4"><path d="M0 0h6L3 3.500z" fill="#555"/></svg>
<div class="b" style="left:1px;top:614.5px;width:748px;height:1px;background:#c6c6c6;"></div>
<svg class="b" style="left:23.5px;top:597.5px;" width="5" height="8" viewBox="0 0 5 8"><path d="M4.500 0L0 4l4.500 4z" fill="#c2c2c2"/></svg>
<svg class="b" style="left:50px;top:597.5px;" width="5" height="8" viewBox="0 0 5 8"><path d="M0 0l4.500 4L0 8z" fill="#c2c2c2"/></svg>
<div class="b" style="left:91.5px;top:589px;width:57.5px;height:21px;background:#fff;border-left:1px solid #b0b0b0;border-right:1px solid #b0b0b0;"></div>
<div class="b" style="left:91.5px;top:609.5px;width:59.5px;height:2px;background:#1e6e42;"></div>
<span class="t" style="left:102.50px;top:595.62px;font:700 12.5px/12.5px 'Liberation Sans',sans-serif;color:#1e6e42;transform:scaleX(0.9049);">Sheet1</span>
<svg class="b" style="left:180.5px;top:593.5px;" width="17" height="17" viewBox="0 0 17 17"><circle cx="8.500" cy="8.500" r="7.200" fill="none" stroke="#7a7a7a" stroke-width="1.100"/><path d="M8.500 4.500v8M4.500 8.500h8" stroke="#6a6a6a" stroke-width="1.400"/></svg>
<svg class="b" style="left:446.5px;top:597px;" width="3" height="11" viewBox="0 0 3 11"><circle cx="1.500" cy="1.500" r=".9" fill="#9a9a9a"/><circle cx="1.500" cy="5.500" r=".9" fill="#9a9a9a"/><circle cx="1.500" cy="9.500" r=".9" fill="#9a9a9a"/></svg>
<div class="b" style="left:464.5px;top:595.5px;width:11px;height:12px;background:#fff;border:1px solid #ababab;"></div>
<svg class="b" style="left:468px;top:598.5px;" width="4" height="7" viewBox="0 0 4 7"><path d="M4 0L0 3.500 4 7z" fill="#555"/></svg>
<div class="b" style="left:477.5px;top:595.5px;width:212px;height:12px;background:#fff;border:1px solid #ababab;border-left:none;"></div>
<div class="b" style="left:690.5px;top:595.5px;width:26.5px;height:14px;background:#d0d0d0;"></div>
<div class="b" style="left:717px;top:595.5px;width:11px;height:12px;background:#fff;border:1px solid #ababab;"></div>
<svg class="b" style="left:721.5px;top:598.5px;" width="4" height="7" viewBox="0 0 4 7"><path d="M0 0l4 3.500L0 7z" fill="#555"/></svg>
<span class="t" style="left:218.80px;top:619.27px;font:400 11.5px/11.5px 'Liberation Sans',sans-serif;color:#444;transform:scaleX(0.8668);">Average: 6.656666667</span>
<span class="t" style="left:335.20px;top:619.27px;font:400 11.5px/11.5px 'Liberation Sans',sans-serif;color:#444;transform:scaleX(0.9102);">Count: 13</span>
<span class="t" style="left:396.00px;top:619.27px;font:400 11.5px/11.5px 'Liberation Sans',sans-serif;color:#444;transform:scaleX(0.8534);">Sum: 79.88</span>
<div class="b" style="left:463px;top:615px;width:36px;height:20px;background:#c8c8c8;"></div>
<svg class="b" style="left:474.5px;top:619px;" width="12" height="12" viewBox="0 0 12 12"><rect x=".6" y=".6" width="10.800" height="10.800" fill="none" stroke="#555" stroke-width="1.100"/><path d="M4.200 .6v10.800M7.800 .6v10.800M.6 4.200h10.800M.6 7.800h10.800" stroke="#555" stroke-width="1"/></svg>
<svg class="b" style="left:512px;top:619px;" width="12" height="12" viewBox="0 0 12 12"><rect x=".6" y=".6" width="10.800" height="10.800" fill="none" stroke="#555" stroke-width="1.100"/><rect x="3.200" y="3.200" width="5.600" height="5.600" fill="none" stroke="#555" stroke-width="1"/><path d="M4.500 5h3M4.500 7h3" stroke="#555" stroke-width=".8"/></svg>
<svg class="b" style="left:549px;top:618.5px;" width="12" height="12" viewBox="0 0 12 12"><rect x=".6" y=".6" width="10.800" height="10.800" fill="none" stroke="#555" stroke-width="1.100"/><path d="M.6 7.500h4.900V.6M5.500 7.500h2.300V.6" stroke="#555" stroke-width="1" fill="none"/></svg>
<div class="b" style="left:578.5px;top:624.5px;width:7px;height:1.2px;background:#444;"></div>
<div class="b" style="left:591.5px;top:624.5px;width:92px;height:1px;background:#8a8a8a;"></div>
<div class="b" style="left:635px;top:619px;width:4px;height:11px;background:#5a5a5a;"></div>
<svg class="b" style="left:687.5px;top:621px;" width="8" height="8" viewBox="0 0 8 8"><path d="M4 0v8M0 4h8" stroke="#444" stroke-width="1.200"/></svg>
<span class="t" style="left:707.60px;top:619.27px;font:400 11.5px/11.5px 'Liberation Sans',sans-serif;color:#444;transform:scaleX(0.8296);">100%</span>
<svg class="b" style="left:537px;top:467px;" width="8" height="8" viewBox="0 0 8 8"><rect x="1" y="1.500" width="5.600" height="5.600" fill="#fff"/><rect x="1.800" y="2.300" width="4.400" height="4.400" fill="#156b3a"/></svg>
<svg class="b" style="left:542px;top:473px;" width="25" height="24" viewBox="0 0 25 24"><rect x="1.700" y="1.700" width="20.700" height="20.500" fill="#fff" stroke="#2e7d4f" stroke-width="1.200"/><rect x="8.800" y="5.600" width="9.900" height="12.400" rx="1" fill="#fff" stroke="#8a8a8a" stroke-width="1.100"/><path d="M8.800 6.500q0-1 1-1h7.900q1 0 1 1v.9H8.800z" fill="#5e5e5e"/><path d="M18.700 6.800v10.800" stroke="#5e5e5e" stroke-width="1.200"/><path d="M11.800 9.800h2.600" stroke="#d9482b" stroke-width="1.300"/><path d="M9.800 12.900h7.400" stroke="#3b78c8" stroke-width="1.500"/><path d="M9.800 16h5.600" stroke="#3d9160" stroke-width="1.300"/><path d="M8.200 4.400h3.200L9.300 8.700h2.200L6.300 15l1.300-4.500H5.200z" fill="#f0b45c" stroke="#fff" stroke-width=".5"/></svg>
<svg class="b" style="left:517px;top:448px;" width="58" height="58" viewBox="0 0 58 58"><rect x="3.500" y="3.500" width="50.100" height="50.700" fill="none" stroke="#fe0000" stroke-width="3"/></svg>
<svg class="b" style="left:522px;top:458px;" width="24" height="30" viewBox="0 0 24 30"><g fill="#fff" stroke="#fff" stroke-width="2.200" stroke-linejoin="round"><path d="M10.5 3.0l2.600 3h-5.200zM2.9000000000000004 10.6l3-2.600v5.200zM18.5 10.6l-3-2.600v5.200z"/><path d="M10.5 5.3999999999999995V13.6M5.0 10.6H16.0" fill="none" stroke-width="3"/></g><path d="M10.5 3.0l2.500 3h-5zM2.9000000000000004 10.6l3-2.500v5zM18.5 10.6l-3-2.500v5z" fill="#111"/><path d="M10.5 5.3999999999999995V12.6M5.0 10.6H16.0" stroke="#111" stroke-width="1.200" fill="none"/><path d="M10.5 10.9v13l2.900-2.700 2.200 5.300 2.200-.9-2.200-5.200h4.300z" fill="#fff" stroke="#111" stroke-width="1.050" stroke-linejoin="round"/></svg>
<svg class="b" style="left:0px;top:632px;" width="750" height="4" viewBox="0 0 750 4"><rect x="0" y="2.600" width="750" height="1.400" fill="#000"/></svg>
</div></body></html>
